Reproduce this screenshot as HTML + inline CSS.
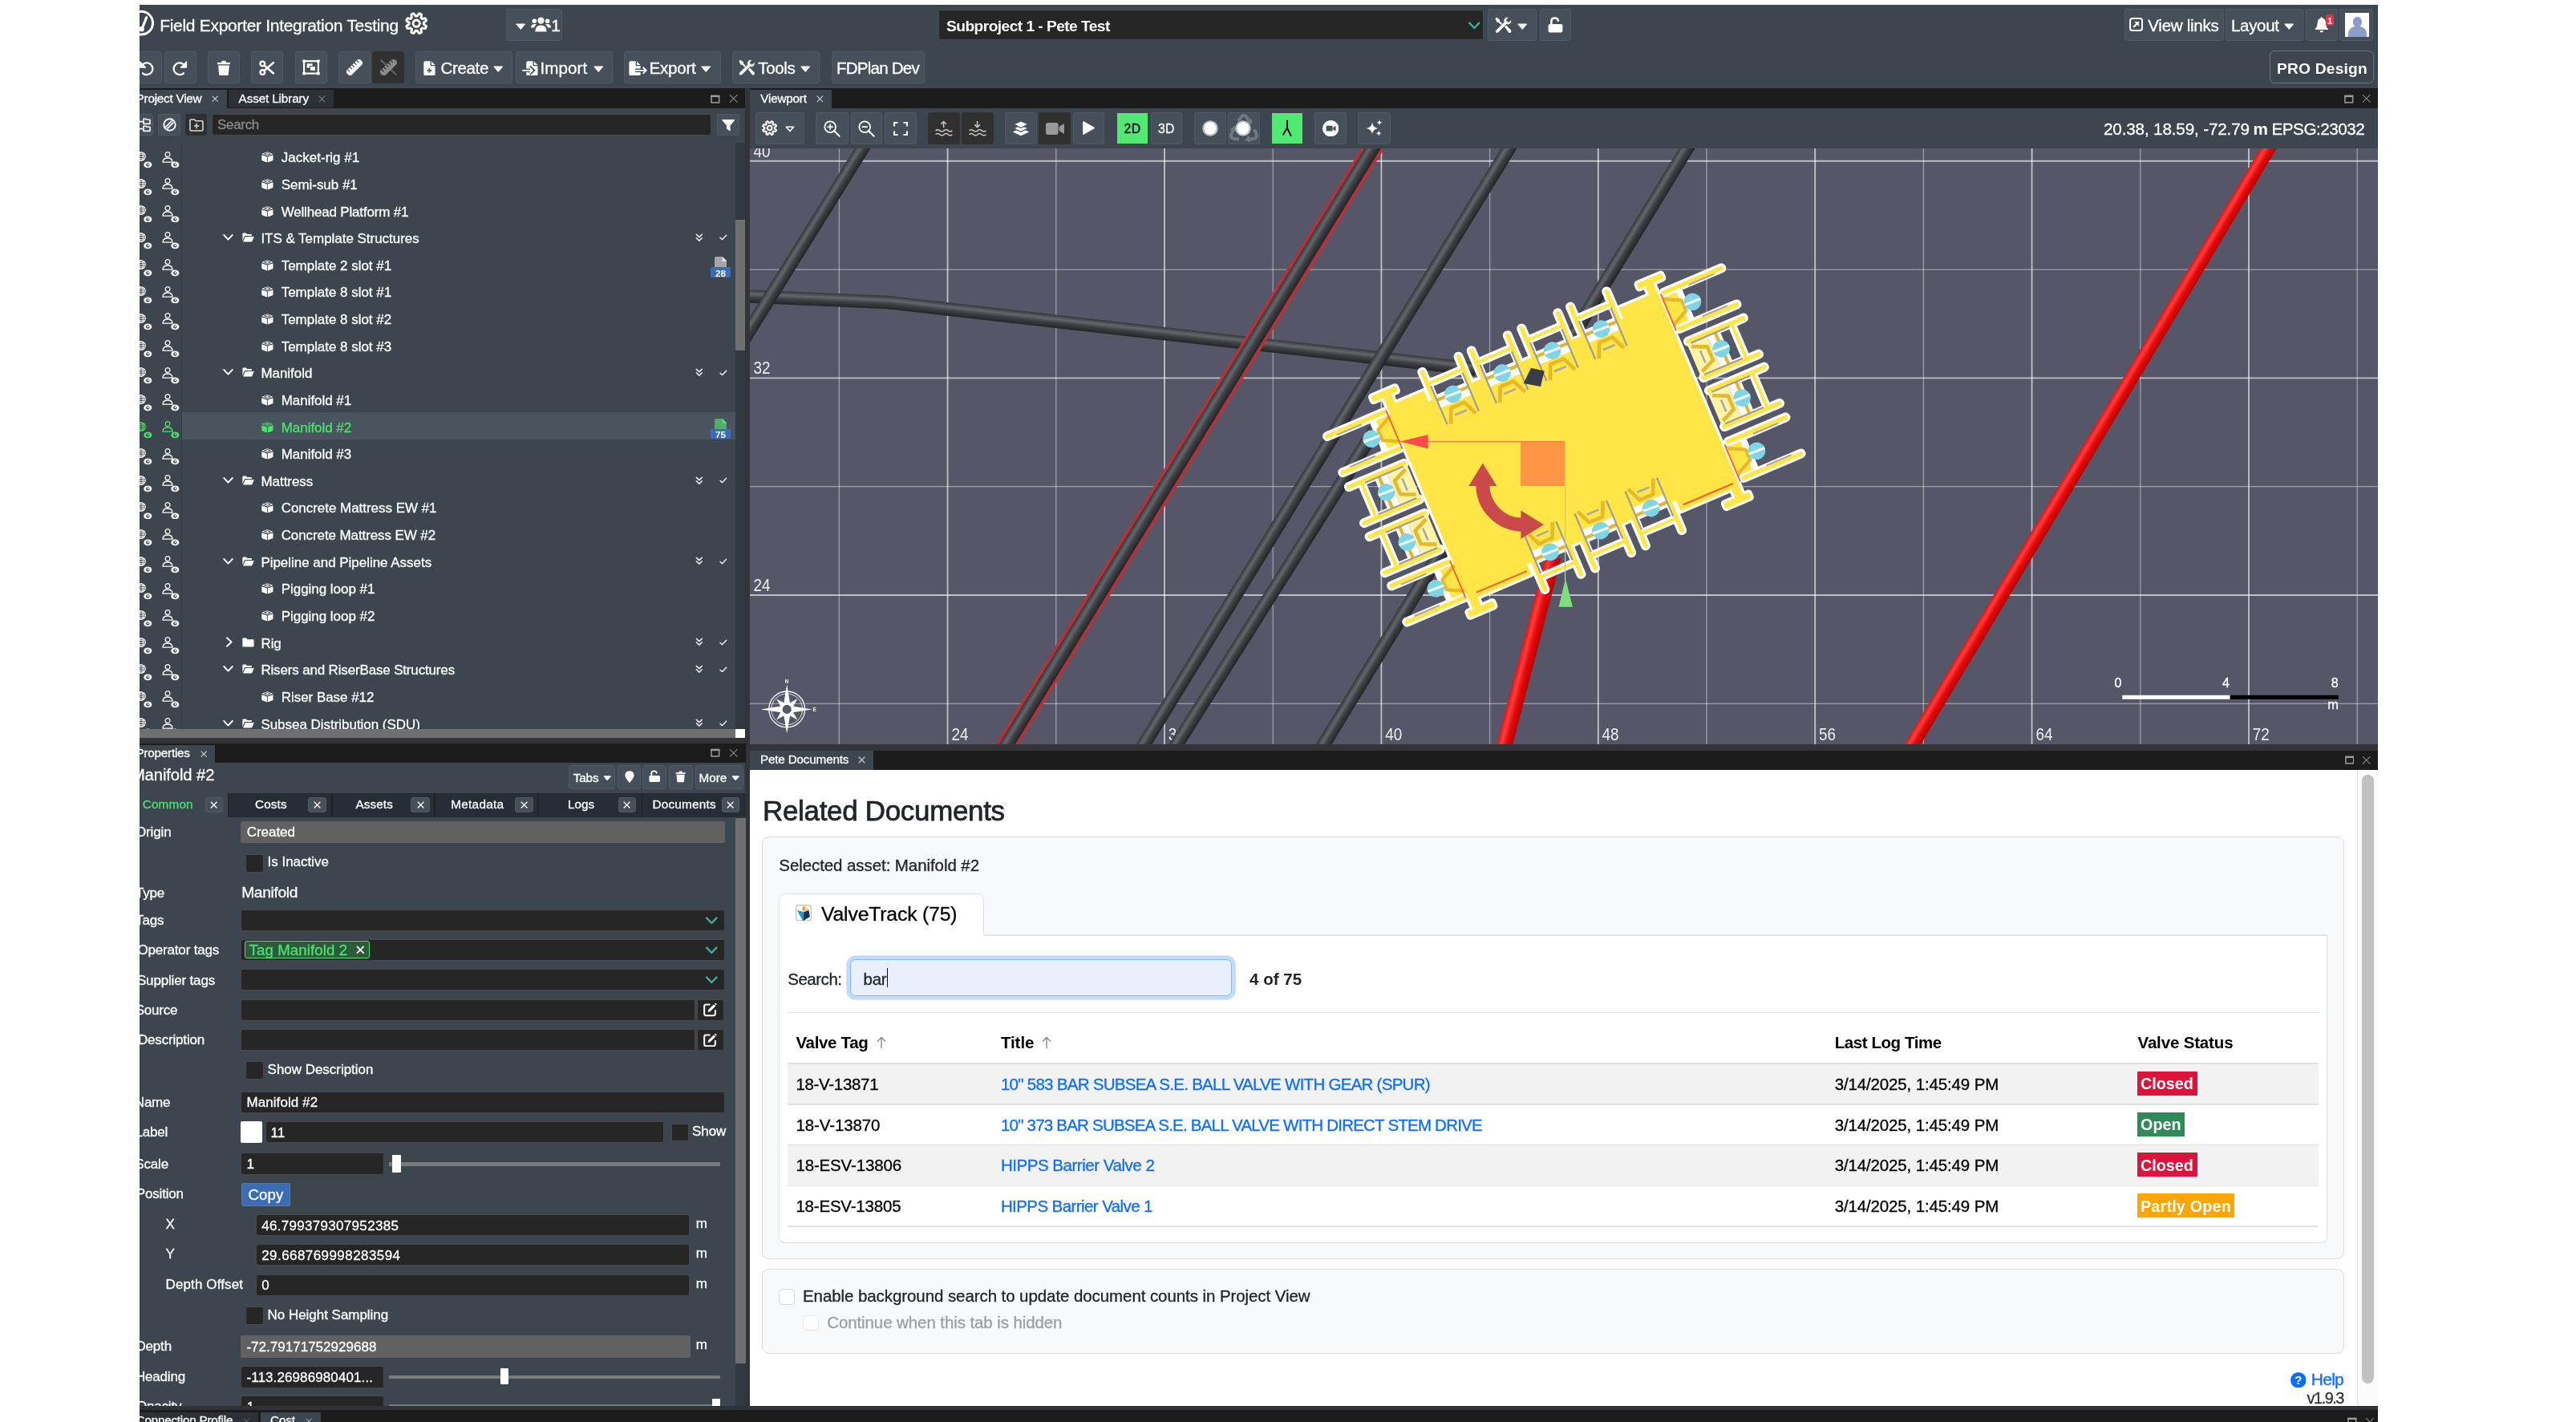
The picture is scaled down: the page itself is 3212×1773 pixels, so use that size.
<!DOCTYPE html>
<html><head><meta charset="utf-8"><title>Field Exporter Integration Testing</title>
<style>
html,body{margin:0;padding:0;background:#fff;}
body{width:3212px;height:1773px;position:relative;overflow:hidden;font-family:"Liberation Sans",sans-serif;}
#app{position:absolute;left:0;top:0;width:3212px;height:1773px;overflow:hidden;clip-path:inset(6px 247px 0 174px);will-change:transform;}
#app div,#app span.t,#app svg{position:absolute;box-sizing:border-box;}
span.t{white-space:nowrap;-webkit-text-stroke-width:0.3px;}
.btn{background:#46505a;border:1px solid #505a64;border-radius:3px;}
.btnd{background:#303030;border:1px solid #303030;border-radius:3px;}
.inp{background:#262626;border:1px solid #484745;border-radius:3px;}
</style></head><body><div id="app">
<div style="left:174.00px;top:6.00px;width:2791.00px;height:1767.00px;background:#3d454e;"></div>
<svg style="left:160.00px;top:12.00px;" width="36.00" height="36.00" viewBox="0 0 36 36"><circle cx="16.1" cy="16.7" r="14.4" fill="none" stroke="#fff" stroke-width="3"/><path d="M22.6 9.8 L17.2 23.6" stroke="#fff" stroke-width="3.2" stroke-linecap="round"/><circle cx="16.6" cy="24.2" r="3.2" fill="#fff"/></svg>
<span class="t" style="left:199.20px;top:21.40px;font-size:21.00px;line-height:21.00px;color:#fff;letter-spacing:-0.297px;">Field Exporter Integration Testing</span>
<svg style="left:505.40px;top:14.60px;" width="28.40" height="28.40" viewBox="0 0 24 24"><path d="M22.02 16.15 L21.85 16.54 L21.67 16.93 L21.47 17.30 L20.62 17.28 L19.73 17.17 L18.87 16.99 L18.09 16.80 L17.89 17.03 L17.69 17.26 L17.48 17.48 L17.26 17.69 L17.03 17.89 L16.80 18.09 L16.99 18.87 L17.17 19.73 L17.28 20.62 L17.30 21.47 L16.93 21.67 L16.54 21.85 L16.15 22.02 L15.76 22.18 L15.35 22.32 L14.94 22.44 L14.36 21.83 L13.81 21.12 L13.33 20.38 L12.91 19.70 L12.61 19.73 L12.30 19.74 L12.00 19.75 L11.70 19.74 L11.39 19.73 L11.09 19.70 L10.67 20.38 L10.19 21.12 L9.64 21.83 L9.06 22.44 L8.65 22.32 L8.24 22.18 L7.85 22.02 L7.46 21.85 L7.07 21.67 L6.70 21.47 L6.72 20.62 L6.83 19.73 L7.01 18.87 L7.20 18.09 L6.97 17.89 L6.74 17.69 L6.52 17.48 L6.31 17.26 L6.11 17.03 L5.91 16.80 L5.13 16.99 L4.27 17.17 L3.38 17.28 L2.53 17.30 L2.33 16.93 L2.15 16.54 L1.98 16.15 L1.82 15.76 L1.68 15.35 L1.56 14.94 L2.17 14.36 L2.88 13.81 L3.62 13.33 L4.30 12.91 L4.27 12.61 L4.26 12.30 L4.25 12.00 L4.26 11.70 L4.27 11.39 L4.30 11.09 L3.62 10.67 L2.88 10.19 L2.17 9.64 L1.56 9.06 L1.68 8.65 L1.82 8.24 L1.98 7.85 L2.15 7.46 L2.33 7.07 L2.53 6.70 L3.38 6.72 L4.27 6.83 L5.13 7.01 L5.91 7.20 L6.11 6.97 L6.31 6.74 L6.52 6.52 L6.74 6.31 L6.97 6.11 L7.20 5.91 L7.01 5.13 L6.83 4.27 L6.72 3.38 L6.70 2.53 L7.07 2.33 L7.46 2.15 L7.85 1.98 L8.24 1.82 L8.65 1.68 L9.06 1.56 L9.64 2.17 L10.19 2.88 L10.67 3.62 L11.09 4.30 L11.39 4.27 L11.70 4.26 L12.00 4.25 L12.30 4.26 L12.61 4.27 L12.91 4.30 L13.33 3.62 L13.81 2.88 L14.36 2.17 L14.94 1.56 L15.35 1.68 L15.76 1.82 L16.15 1.98 L16.54 2.15 L16.93 2.33 L17.30 2.53 L17.28 3.38 L17.17 4.27 L16.99 5.13 L16.80 5.91 L17.03 6.11 L17.26 6.31 L17.48 6.52 L17.69 6.74 L17.89 6.97 L18.09 7.20 L18.87 7.01 L19.73 6.83 L20.62 6.72 L21.47 6.70 L21.67 7.07 L21.85 7.46 L22.02 7.85 L22.18 8.24 L22.32 8.65 L22.44 9.06 L21.83 9.64 L21.12 10.19 L20.38 10.67 L19.70 11.09 L19.73 11.39 L19.74 11.70 L19.75 12.00 L19.74 12.30 L19.73 12.61 L19.70 12.91 L20.38 13.33 L21.12 13.81 L21.83 14.36 L22.44 14.94 L22.32 15.35 L22.18 15.76 Z" fill="none" stroke="#fff" stroke-width="2.5" stroke-linejoin="round"/><circle cx="12" cy="12" r="3.5" fill="none" stroke="#fff" stroke-width="2.5"/></svg>
<div class="btn" style="left:631.30px;top:11.00px;width:69.70px;height:40.00px;"></div>
<svg style="left:643.00px;top:28.60px;" width="12.60" height="8.00" viewBox="0 0 12 8"><path d="M0.8 1 L11.2 1 L6 7.2 Z" fill="#fff" stroke="#fff" stroke-width="1.2" stroke-linejoin="round"/></svg>
<svg style="left:662.00px;top:21.00px;" width="25.00" height="19.00" viewBox="0 0 25 19"><circle cx="12.5" cy="4.6" r="4.2" fill="#fff"/><path d="M5.4 18.6 Q5.4 10.6 12.5 10.6 Q19.6 10.6 19.6 18.6 Z" fill="#fff"/><circle cx="4.3" cy="5.2" r="2.8" fill="#fff"/><path d="M0 13.6 Q0 9 4.6 9 Q6.4 9 7 9.6 Q4.2 11.4 4 13.6 Z" fill="#fff"/><circle cx="20.7" cy="5.2" r="2.8" fill="#fff"/><path d="M25 13.6 Q25 9 20.4 9 Q18.6 9 18 9.6 Q20.8 11.4 21 13.6 Z" fill="#fff"/></svg>
<span class="t" style="left:687.20px;top:21.60px;font-size:20.60px;line-height:20.60px;color:#fff;">1</span>
<div class="inp" style="left:1169.7px;top:11.6px;width:680.7px;height:38.6px;border-radius:3px;border-color:#4a4b4c"></div>
<span class="t" style="left:1180.00px;top:23.30px;font-size:19.20px;line-height:19.20px;color:#fff;font-weight:700;-webkit-text-stroke-width:0;letter-spacing:-0.558px;">Subproject 1 - Pete Test</span>
<svg style="left:1830.60px;top:26.60px;" width="14.60" height="10.00" viewBox="0 0 14.6 10"><path d="M1.2 1.6 L7.3 8 L13.4 1.6" fill="none" stroke="#3fae9a" stroke-width="2.4" stroke-linecap="round" stroke-linejoin="round"/></svg>
<div class="btn" style="left:1855.40px;top:11.00px;width:61.10px;height:40.00px;"></div>
<svg style="left:1863.50px;top:20.50px;" width="21.00" height="21.00" viewBox="0 0 21 21"><path d="M2.2 0.6 L6 3.4 L6.2 5.4 L11 10.2 L9.4 11.8 L4.6 7 L2.6 6.8 L0.4 2.6 Z" fill="#fff"/><path d="M12 12.4 L14 10.6 L20 16.6 Q21 18 19.8 19.4 Q18.4 20.6 17 19.4 Z" fill="#fff"/><path d="M20.4 3.4 L17.4 6.2 L15 5.6 L14.6 3.4 L17.4 0.4 Q13.6 -0.4 11.6 2.4 Q10.4 4.4 11.2 6.6 L1.2 16.6 Q-0.2 18.4 1.2 19.8 Q2.8 21 4.4 19.6 L14.4 9.6 Q17.2 10.4 19.2 8.6 Q21.2 6.4 20.4 3.4 Z" fill="#fff" stroke="#46505a" stroke-width="0.8"/></svg>
<svg style="left:1892.00px;top:28.60px;" width="12.60" height="8.00" viewBox="0 0 12 8"><path d="M0.8 1 L11.2 1 L6 7.2 Z" fill="#fff" stroke="#fff" stroke-width="1.2" stroke-linejoin="round"/></svg>
<div class="btn" style="left:1920.00px;top:11.00px;width:38.50px;height:40.00px;"></div>
<svg style="left:1930.00px;top:20.50px;" width="19.00" height="20.00" viewBox="0 0 19 20"><rect x="0.6" y="9" width="17.8" height="10.6" rx="2" fill="#fff"/><path d="M4.4 9.4 V5.8 Q4.4 1.6 8.6 1.6 Q12.2 1.6 12.9 4.8" fill="none" stroke="#fff" stroke-width="2.5" stroke-linecap="round"/></svg>
<div class="btn" style="left:2649.00px;top:11.00px;width:123.70px;height:40.00px;"></div>
<svg style="left:2654.70px;top:22.40px;" width="17.20" height="17.20" viewBox="0 0 17 17"><rect x="1.1" y="1.1" width="14.8" height="14.8" rx="2.8" fill="none" stroke="#fff" stroke-width="2"/><path d="M6 5 H12 V11 Z" fill="#fff"/><path d="M5.2 11.8 L10 7" stroke="#fff" stroke-width="2.2"/></svg>
<span class="t" style="left:2678.30px;top:21.60px;font-size:20.60px;line-height:20.60px;color:#fff;letter-spacing:-0.301px;">View links</span>
<div class="btn" style="left:2775.20px;top:11.00px;width:96.80px;height:40.00px;"></div>
<span class="t" style="left:2782.00px;top:21.60px;font-size:20.60px;line-height:20.60px;color:#fff;letter-spacing:-0.375px;">Layout</span>
<svg style="left:2847.80px;top:28.60px;" width="12.60" height="8.00" viewBox="0 0 12 8"><path d="M0.8 1 L11.2 1 L6 7.2 Z" fill="#fff" stroke="#fff" stroke-width="1.2" stroke-linejoin="round"/></svg>
<div class="btn" style="left:2875.00px;top:11.00px;width:40.40px;height:40.00px;"></div>
<svg style="left:2886.30px;top:21.00px;" width="17.60" height="20.00" viewBox="0 0 18 20"><path d="M9 1 Q3.6 1.6 3.6 8 Q3.6 12.6 0.8 15 V16.2 H17.2 V15 Q14.4 12.6 14.4 8 Q14.4 1.6 9 1 Z" fill="#fff"/><rect x="7.8" y="0" width="2.4" height="2.4" rx="1.2" fill="#fff"/><path d="M6.6 17.4 H11.4 Q11 19.8 9 19.8 Q7 19.8 6.6 17.4 Z" fill="#fff"/></svg>
<div style="left:2900px;top:18px;width:10.2px;height:14px;background:#dc3545;border-radius:2.5px"></div>
<span class="t" style="left:2901.90px;top:20.65px;font-size:11.50px;line-height:11.50px;color:#fff;font-weight:700;-webkit-text-stroke-width:0;">1</span>
<div class="btn" style="left:2917.30px;top:11.00px;width:41.50px;height:40.00px;"></div>
<div style="left:2924px;top:16px;width:30px;height:30px;background:#fff;overflow:hidden"><div style="left:9.5px;top:5px;width:11px;height:12.5px;border-radius:50%;background:#8b9dc9"></div><div style="left:3.5px;top:17px;width:23px;height:22px;border-radius:9px 9px 0 0;background:#8b9dc9"></div><div style="left:12px;top:14px;width:6px;height:6px;background:#8b9dc9"></div></div>
<div class="btn" style="left:162.00px;top:64.00px;width:39.80px;height:40.00px;"></div>
<svg style="left:173.20px;top:74.60px;" width="20.00" height="20.00" viewBox="0 0 20 20"><g transform="translate(20,0) scale(-1,1)"><path d="M15.83 6.24 A7.40 7.40 0 1 0 14.95 16.30" fill="none" stroke="#fff" stroke-width="2.3" stroke-linecap="round"/><path d="M18.6 1.6 L18.6 9.2 L11 9.2 Z" fill="#fff" stroke="#fff" stroke-width="1" stroke-linejoin="round"/></g></svg>
<div class="btn" style="left:205.40px;top:64.00px;width:39.60px;height:40.00px;"></div>
<svg style="left:214.30px;top:74.60px;" width="20.00" height="20.00" viewBox="0 0 20 20"><path d="M15.83 6.24 A7.40 7.40 0 1 0 14.95 16.30" fill="none" stroke="#fff" stroke-width="2.3" stroke-linecap="round"/><path d="M18.6 1.6 L18.6 9.2 L11 9.2 Z" fill="#fff" stroke="#fff" stroke-width="1" stroke-linejoin="round"/></svg>
<div class="btn" style="left:259.30px;top:64.00px;width:39.60px;height:40.00px;"></div>
<svg style="left:270.00px;top:74.50px;" width="18.00" height="19.60" viewBox="0 0 18 20"><path d="M0.8 3 H17.2 V5.3 H0.8 Z" fill="#fff"/><path d="M5.8 3 L6.8 0.8 H11.2 L12.2 3 Z" fill="#fff"/><path d="M2 6.6 H16 L15 18.2 Q14.9 19.4 13.6 19.4 H4.4 Q3.1 19.4 3 18.2 Z" fill="#fff"/></svg>
<div class="btn" style="left:313.20px;top:64.00px;width:40.00px;height:40.00px;"></div>
<svg style="left:323.00px;top:74.50px;" width="20.00" height="19.60" viewBox="0 0 20 20"><circle cx="4.2" cy="4.6" r="2.9" fill="none" stroke="#fff" stroke-width="2.4"/><circle cx="4.2" cy="15.4" r="2.9" fill="none" stroke="#fff" stroke-width="2.4"/><path d="M6.4 6.6 L18.8 17.4 M6.4 13.4 L18.8 2.6" stroke="#fff" stroke-width="2.6" stroke-linecap="butt" fill="none"/></svg>
<div class="btn" style="left:367.50px;top:64.00px;width:40.10px;height:40.00px;"></div>
<svg style="left:376.50px;top:74.20px;" width="22.00" height="19.80" viewBox="0 0 22 20"><rect x="2" y="2.2" width="18" height="15.6" fill="none" stroke="#fff" stroke-width="2.2"/><rect x="0.2" y="0.4" width="3.8" height="3.8" rx="0.8" fill="#fff"/><rect x="18" y="0.4" width="3.8" height="3.8" rx="0.8" fill="#fff"/><rect x="0.2" y="15.8" width="3.8" height="3.8" rx="0.8" fill="#fff"/><rect x="18" y="15.8" width="3.8" height="3.8" rx="0.8" fill="#fff"/><rect x="5.6" y="5.4" width="7" height="5.2" fill="#fff"/><rect x="9.4" y="8.6" width="7.2" height="5.8" fill="#fff" stroke="#46505a" stroke-width="1"/></svg>
<div class="btn" style="left:421.90px;top:64.00px;width:40.10px;height:40.00px;"></div>
<svg style="left:431.70px;top:74.20px;" width="20.00" height="20.00" viewBox="0 0 20 20"><g transform="rotate(-45 10 10)"><rect x="-2" y="5.8" width="24" height="8.4" rx="1" fill="#fff"/><rect x="1.4" y="5.8" width="1.3" height="3.6" fill="#46505a"/><rect x="5.4" y="5.8" width="1.3" height="3.6" fill="#46505a"/><rect x="9.4" y="5.8" width="1.3" height="3.6" fill="#46505a"/><rect x="13.4" y="5.8" width="1.3" height="3.6" fill="#46505a"/><rect x="17.4" y="5.8" width="1.3" height="3.6" fill="#46505a"/></g></svg>
<div class="btnd" style="left:464.30px;top:64.00px;width:39.60px;height:40.00px;"></div>
<svg style="left:473.50px;top:74.20px;" width="21.00" height="20.00" viewBox="-0.5 0 21 20"><path d="M1 1.5 L19 18.5 M19 1.5 L1 18.5" stroke="#5a5a5a" stroke-width="2.6" stroke-linecap="round"/><g transform="rotate(-45 10 10)"><rect x="-2" y="5.8" width="24" height="8.4" rx="1" fill="#8c8c8c"/><rect x="1.4" y="5.8" width="1.3" height="3.6" fill="#303030"/><rect x="5.4" y="5.8" width="1.3" height="3.6" fill="#303030"/><rect x="9.4" y="5.8" width="1.3" height="3.6" fill="#303030"/><rect x="13.4" y="5.8" width="1.3" height="3.6" fill="#303030"/><rect x="17.4" y="5.8" width="1.3" height="3.6" fill="#303030"/></g></svg>
<div class="btn" style="left:518.30px;top:64.00px;width:121.20px;height:40.00px;"></div>
<svg style="left:528.40px;top:75.80px;" width="15.00" height="18.70" viewBox="0 0 15 19"><path d="M2 0.3 H8.6 V5.6 Q8.6 6.4 9.4 6.4 H14.7 V16.8 Q14.7 18.7 12.8 18.7 H2 Q0.2 18.7 0.2 16.8 V2.2 Q0.2 0.3 2 0.3 Z" fill="#fff"/><path d="M10 0.4 L14.6 5 H10 Z" fill="#fff"/><path d="M7.4 9 V15 M4.4 12 H10.4" stroke="#46505a" stroke-width="1.7"/></svg>
<span class="t" style="left:549.60px;top:74.60px;font-size:20.60px;line-height:20.60px;color:#fff;letter-spacing:-0.405px;">Create</span>
<svg style="left:615.00px;top:82.40px;" width="12.60" height="8.00" viewBox="0 0 12 8"><path d="M0.8 1 L11.2 1 L6 7.2 Z" fill="#fff" stroke="#fff" stroke-width="1.2" stroke-linejoin="round"/></svg>
<div class="btn" style="left:642.70px;top:64.00px;width:121.00px;height:40.00px;"></div>
<svg style="left:650.70px;top:75.80px;" width="20.00" height="18.70" viewBox="0 0 20 19"><g transform="translate(5,0)"><path d="M2 0.3 H8.6 V5.6 Q8.6 6.4 9.4 6.4 H14.7 V16.8 Q14.7 18.7 12.8 18.7 H2 Q0.2 18.7 0.2 16.8 V2.2 Q0.2 0.3 2 0.3 Z" fill="#fff"/><path d="M10 0.4 L14.6 5 H10 Z" fill="#fff"/></g><path d="M4 12 H14" stroke="#46505a" stroke-width="4.4"/><path d="M9 7.4 L14 12 L9 16.6" stroke="#46505a" stroke-width="4" fill="none"/><path d="M0.6 12 H12.6 M9 8.2 L12.9 12 L9 15.8" stroke="#fff" stroke-width="1.8" fill="none" stroke-linecap="round" stroke-linejoin="round"/></svg>
<span class="t" style="left:673.50px;top:74.60px;font-size:20.60px;line-height:20.60px;color:#fff;letter-spacing:0.053px;">Import</span>
<svg style="left:739.60px;top:82.40px;" width="12.60" height="8.00" viewBox="0 0 12 8"><path d="M0.8 1 L11.2 1 L6 7.2 Z" fill="#fff" stroke="#fff" stroke-width="1.2" stroke-linejoin="round"/></svg>
<div class="btn" style="left:778.00px;top:64.00px;width:120.90px;height:40.00px;"></div>
<svg style="left:783.80px;top:75.80px;" width="23.00" height="18.70" viewBox="0 0 23 19"><path d="M2 0.3 H8.6 V5.6 Q8.6 6.4 9.4 6.4 H14.7 V16.8 Q14.7 18.7 12.8 18.7 H2 Q0.2 18.7 0.2 16.8 V2.2 Q0.2 0.3 2 0.3 Z" fill="#fff"/><path d="M10 0.4 L14.6 5 H10 Z" fill="#fff"/><path d="M8 12 H23" stroke="#46505a" stroke-width="4.6"/><path d="M8.4 12 H21.6 M18.2 8.4 L22 12 L18.2 15.6" stroke="#fff" stroke-width="1.8" fill="none" stroke-linecap="round" stroke-linejoin="round"/></svg>
<span class="t" style="left:809.40px;top:74.60px;font-size:20.60px;line-height:20.60px;color:#fff;letter-spacing:-0.223px;">Export</span>
<svg style="left:874.30px;top:82.40px;" width="12.60" height="8.00" viewBox="0 0 12 8"><path d="M0.8 1 L11.2 1 L6 7.2 Z" fill="#fff" stroke="#fff" stroke-width="1.2" stroke-linejoin="round"/></svg>
<div class="btn" style="left:913.00px;top:64.00px;width:108.90px;height:40.00px;"></div>
<svg style="left:921.20px;top:74.20px;" width="20.60" height="20.60" viewBox="0 0 21 21"><path d="M2.2 0.6 L6 3.4 L6.2 5.4 L11 10.2 L9.4 11.8 L4.6 7 L2.6 6.8 L0.4 2.6 Z" fill="#fff"/><path d="M12 12.4 L14 10.6 L20 16.6 Q21 18 19.8 19.4 Q18.4 20.6 17 19.4 Z" fill="#fff"/><path d="M20.4 3.4 L17.4 6.2 L15 5.6 L14.6 3.4 L17.4 0.4 Q13.6 -0.4 11.6 2.4 Q10.4 4.4 11.2 6.6 L1.2 16.6 Q-0.2 18.4 1.2 19.8 Q2.8 21 4.4 19.6 L14.4 9.6 Q17.2 10.4 19.2 8.6 Q21.2 6.4 20.4 3.4 Z" fill="#fff" stroke="#46505a" stroke-width="0.8"/></svg>
<span class="t" style="left:945.30px;top:74.60px;font-size:20.60px;line-height:20.60px;color:#fff;letter-spacing:-0.418px;">Tools</span>
<svg style="left:998.00px;top:82.40px;" width="12.60" height="8.00" viewBox="0 0 12 8"><path d="M0.8 1 L11.2 1 L6 7.2 Z" fill="#fff" stroke="#fff" stroke-width="1.2" stroke-linejoin="round"/></svg>
<div class="btn" style="left:1037.30px;top:64.00px;width:115.50px;height:40.00px;"></div>
<span class="t" style="left:1043.00px;top:74.60px;font-size:20.60px;line-height:20.60px;color:#fff;letter-spacing:-0.805px;">FDPlan Dev</span>
<div style="left:2830.4px;top:63.4px;width:129.2px;height:41px;border:1.4px solid #6d767e;border-radius:6px;background:#3d454e"></div>
<span class="t" style="left:2839.00px;top:76.30px;font-size:19.20px;line-height:19.20px;color:#fff;font-weight:700;-webkit-text-stroke-width:0;letter-spacing:0.205px;">PRO Design</span>
<div style="left:173.00px;top:110.00px;width:756.00px;height:25.00px;background:#1c1c1c;"></div>
<div style="left:173.00px;top:111.50px;width:110.00px;height:23.50px;background:#3d454e;"></div>
<div style="left:284.90px;top:111.50px;width:131.10px;height:22.80px;background:#2d3036;"></div>
<span class="t" style="left:169.60px;top:115.25px;font-size:15.30px;line-height:15.30px;color:#fff;letter-spacing:-0.247px;">Project View</span>
<svg style="left:263.90px;top:119.30px;" width="8.40" height="8.40" viewBox="0 0 12 12"><path d="M1 1 L11 11 M11 1 L1 11" stroke="#d0d0d0" stroke-width="1.5" fill="none"/></svg>
<span class="t" style="left:297.60px;top:115.25px;font-size:15.30px;line-height:15.30px;color:#fff;letter-spacing:-0.145px;">Asset Library</span>
<svg style="left:397.00px;top:119.30px;" width="8.80" height="8.80" viewBox="0 0 12 12"><path d="M1 1 L11 11 M11 1 L1 11" stroke="#7c7c7c" stroke-width="1.5" fill="none"/></svg>
<svg style="left:886.20px;top:117.50px;" width="11.60" height="11.00" viewBox="0 0 12 11"><rect x="1" y="1.6" width="10" height="8.4" fill="none" stroke="#9a9a9a" stroke-width="1.6"/><rect x="0.2" y="0.4" width="11.6" height="2.6" fill="#9a9a9a"/></svg>
<svg style="left:909.30px;top:116.80px;" width="11.40" height="11.60" viewBox="0 0 12 12"><path d="M1 1 L11 11 M11 1 L1 11" stroke="#8a8a8a" stroke-width="1.1" fill="none"/></svg>
<div style="left:929.00px;top:110.00px;width:6.00px;height:1663.00px;background:#323439;"></div>
<div class="btn" style="left:160.00px;top:142.40px;width:30.60px;height:26.60px;"></div>
<svg style="left:169.60px;top:146.80px;" width="18.00" height="18.00" viewBox="0 0 18 18"><path d="M1 0 V13.6 H8 M1 4.6 H8" fill="none" stroke="#fff" stroke-width="1.8"/><path d="M9 1.2 H12 L13 2.2 H17 V7.4 H9 Z M9 10.2 H12 L13 11.2 H17 V16.4 H9 Z" fill="none" stroke="#fff" stroke-width="1.6" stroke-linejoin="round"/></svg>
<div class="btn" style="left:197.30px;top:142.40px;width:27.30px;height:26.60px;"></div>
<svg style="left:202.50px;top:147.20px;" width="17.00" height="17.00" viewBox="0 0 17 17"><circle cx="8.5" cy="8.5" r="7.2" fill="none" stroke="#fff" stroke-width="1.9"/><path d="M3.4 11.6 L11.6 3.4 M5.4 13.6 L13.6 5.4" stroke="#fff" stroke-width="1.8"/></svg>
<div class="btnd" style="left:231.30px;top:142.40px;width:26.60px;height:26.60px;"></div>
<svg style="left:235.60px;top:147.80px;" width="18.00" height="16.00" viewBox="0 0 18 16"><path d="M1 2.2 Q1 1 2.2 1 H6.4 L8 2.8 H15.8 Q17 2.8 17 4 V13.8 Q17 15 15.8 15 H2.2 Q1 15 1 13.8 Z" fill="none" stroke="#d8d8d8" stroke-width="1.6" stroke-linejoin="round"/><path d="M9 5.8 V12.2 M5.8 9 H12.2" stroke="#d8d8d8" stroke-width="1.6"/></svg>
<div class="inp" style="left:264.3px;top:142.4px;width:623.2px;height:26.6px"></div>
<span class="t" style="left:271.00px;top:147.40px;font-size:17.00px;line-height:17.00px;color:#8a8a8a;letter-spacing:-0.311px;">Search</span>
<div class="btn" style="left:894.00px;top:142.40px;width:27.70px;height:26.60px;"></div>
<svg style="left:899.60px;top:148.60px;" width="16.60" height="14.60" viewBox="0 0 17 15"><path d="M0.6 0.6 H16.4 L10.4 7.6 V14.4 L6.6 11.6 V7.6 Z" fill="#fff" stroke="#fff" stroke-width="1" stroke-linejoin="round"/></svg>
<div style="left:173px;top:178px;width:744px;height:731px;overflow:hidden">
<svg style="left:-3.00px;top:11.20px;" width="12.00" height="12.00" viewBox="0 0 12 12"><circle cx="6" cy="6" r="5.3" fill="none" stroke="#fff" stroke-width="1.1"/><ellipse cx="6" cy="6" rx="2.4" ry="5.3" fill="none" stroke="#fff" stroke-width="1"/><path d="M0.8 6 H11.2 M1.6 3.2 H10.4 M1.6 8.8 H10.4" stroke="#fff" stroke-width="1" fill="none"/></svg>
<svg style="left:6.00px;top:23.40px;" width="10.60" height="8.80" viewBox="0 0 11 9"><ellipse cx="5.5" cy="4.5" rx="5.2" ry="4.1" fill="#fff"/><circle cx="5.5" cy="4.5" r="2.3" fill="#3d454e"/><circle cx="5.9" cy="4.2" r="1.1" fill="#fff"/></svg>
<svg style="left:28.60px;top:10.60px;" width="14.00" height="14.00" viewBox="0 0 14 14"><circle cx="7" cy="3.6" r="2.9" fill="none" stroke="#fff" stroke-width="1.3"/><path d="M1 13.2 Q1 8 7 8 Q13 8 13 13.2 Z" fill="none" stroke="#fff" stroke-width="1.3" stroke-linejoin="round"/></svg>
<svg style="left:40.40px;top:23.40px;" width="10.60" height="8.80" viewBox="0 0 11 9"><ellipse cx="5.5" cy="4.5" rx="5.2" ry="4.1" fill="#fff"/><circle cx="5.5" cy="4.5" r="2.3" fill="#3d454e"/><circle cx="5.9" cy="4.2" r="1.1" fill="#fff"/></svg>
<svg style="left:153.00px;top:11.30px;" width="14.80" height="13.80" viewBox="0 0 15 14"><path d="M7.5 0.2 L14.4 2.7 Q14.8 2.9 14.4 3.1 L7.5 5.7 L0.6 3.1 Q0.2 2.9 0.6 2.7 Z" fill="#fff"/><path d="M7.5 1.5 L11.4 2.9 L7.5 4.4 L3.6 2.9 Z" fill="none" stroke="#3d454e" stroke-width="0.9"/><path d="M0.3 4.2 L7.05 6.7 V13.8 L1 11.5 Q0.3 11.2 0.3 10.5 Z" fill="#fff"/><path d="M14.7 4.2 L7.95 6.7 V13.8 L14 11.5 Q14.7 11.2 14.7 10.5 Z" fill="#fff"/></svg>
<span class="t" style="left:177.70px;top:10.40px;font-size:17.00px;line-height:17.00px;color:#fff;letter-spacing:0.021px;">Jacket-rig #1</span>
<svg style="left:-3.00px;top:44.83px;" width="12.00" height="12.00" viewBox="0 0 12 12"><circle cx="6" cy="6" r="5.3" fill="none" stroke="#fff" stroke-width="1.1"/><ellipse cx="6" cy="6" rx="2.4" ry="5.3" fill="none" stroke="#fff" stroke-width="1"/><path d="M0.8 6 H11.2 M1.6 3.2 H10.4 M1.6 8.8 H10.4" stroke="#fff" stroke-width="1" fill="none"/></svg>
<svg style="left:6.00px;top:57.03px;" width="10.60" height="8.80" viewBox="0 0 11 9"><ellipse cx="5.5" cy="4.5" rx="5.2" ry="4.1" fill="#fff"/><circle cx="5.5" cy="4.5" r="2.3" fill="#3d454e"/><circle cx="5.9" cy="4.2" r="1.1" fill="#fff"/></svg>
<svg style="left:28.60px;top:44.23px;" width="14.00" height="14.00" viewBox="0 0 14 14"><circle cx="7" cy="3.6" r="2.9" fill="none" stroke="#fff" stroke-width="1.3"/><path d="M1 13.2 Q1 8 7 8 Q13 8 13 13.2 Z" fill="none" stroke="#fff" stroke-width="1.3" stroke-linejoin="round"/></svg>
<svg style="left:40.40px;top:57.03px;" width="10.60" height="8.80" viewBox="0 0 11 9"><ellipse cx="5.5" cy="4.5" rx="5.2" ry="4.1" fill="#fff"/><circle cx="5.5" cy="4.5" r="2.3" fill="#3d454e"/><circle cx="5.9" cy="4.2" r="1.1" fill="#fff"/></svg>
<svg style="left:153.00px;top:44.93px;" width="14.80" height="13.80" viewBox="0 0 15 14"><path d="M7.5 0.2 L14.4 2.7 Q14.8 2.9 14.4 3.1 L7.5 5.7 L0.6 3.1 Q0.2 2.9 0.6 2.7 Z" fill="#fff"/><path d="M7.5 1.5 L11.4 2.9 L7.5 4.4 L3.6 2.9 Z" fill="none" stroke="#3d454e" stroke-width="0.9"/><path d="M0.3 4.2 L7.05 6.7 V13.8 L1 11.5 Q0.3 11.2 0.3 10.5 Z" fill="#fff"/><path d="M14.7 4.2 L7.95 6.7 V13.8 L14 11.5 Q14.7 11.2 14.7 10.5 Z" fill="#fff"/></svg>
<span class="t" style="left:177.70px;top:44.40px;font-size:17.00px;line-height:17.00px;color:#fff;letter-spacing:-0.036px;">Semi-sub #1</span>
<svg style="left:-3.00px;top:78.46px;" width="12.00" height="12.00" viewBox="0 0 12 12"><circle cx="6" cy="6" r="5.3" fill="none" stroke="#fff" stroke-width="1.1"/><ellipse cx="6" cy="6" rx="2.4" ry="5.3" fill="none" stroke="#fff" stroke-width="1"/><path d="M0.8 6 H11.2 M1.6 3.2 H10.4 M1.6 8.8 H10.4" stroke="#fff" stroke-width="1" fill="none"/></svg>
<svg style="left:6.00px;top:90.66px;" width="10.60" height="8.80" viewBox="0 0 11 9"><ellipse cx="5.5" cy="4.5" rx="5.2" ry="4.1" fill="#fff"/><circle cx="5.5" cy="4.5" r="2.3" fill="#3d454e"/><circle cx="5.9" cy="4.2" r="1.1" fill="#fff"/></svg>
<svg style="left:28.60px;top:77.86px;" width="14.00" height="14.00" viewBox="0 0 14 14"><circle cx="7" cy="3.6" r="2.9" fill="none" stroke="#fff" stroke-width="1.3"/><path d="M1 13.2 Q1 8 7 8 Q13 8 13 13.2 Z" fill="none" stroke="#fff" stroke-width="1.3" stroke-linejoin="round"/></svg>
<svg style="left:40.40px;top:90.66px;" width="10.60" height="8.80" viewBox="0 0 11 9"><ellipse cx="5.5" cy="4.5" rx="5.2" ry="4.1" fill="#fff"/><circle cx="5.5" cy="4.5" r="2.3" fill="#3d454e"/><circle cx="5.9" cy="4.2" r="1.1" fill="#fff"/></svg>
<svg style="left:153.00px;top:78.56px;" width="14.80" height="13.80" viewBox="0 0 15 14"><path d="M7.5 0.2 L14.4 2.7 Q14.8 2.9 14.4 3.1 L7.5 5.7 L0.6 3.1 Q0.2 2.9 0.6 2.7 Z" fill="#fff"/><path d="M7.5 1.5 L11.4 2.9 L7.5 4.4 L3.6 2.9 Z" fill="none" stroke="#3d454e" stroke-width="0.9"/><path d="M0.3 4.2 L7.05 6.7 V13.8 L1 11.5 Q0.3 11.2 0.3 10.5 Z" fill="#fff"/><path d="M14.7 4.2 L7.95 6.7 V13.8 L14 11.5 Q14.7 11.2 14.7 10.5 Z" fill="#fff"/></svg>
<span class="t" style="left:177.70px;top:78.40px;font-size:17.00px;line-height:17.00px;color:#fff;letter-spacing:-0.181px;">Wellhead Platform #1</span>
<svg style="left:-3.00px;top:112.09px;" width="12.00" height="12.00" viewBox="0 0 12 12"><circle cx="6" cy="6" r="5.3" fill="none" stroke="#fff" stroke-width="1.1"/><ellipse cx="6" cy="6" rx="2.4" ry="5.3" fill="none" stroke="#fff" stroke-width="1"/><path d="M0.8 6 H11.2 M1.6 3.2 H10.4 M1.6 8.8 H10.4" stroke="#fff" stroke-width="1" fill="none"/></svg>
<svg style="left:6.00px;top:124.29px;" width="10.60" height="8.80" viewBox="0 0 11 9"><ellipse cx="5.5" cy="4.5" rx="5.2" ry="4.1" fill="#fff"/><circle cx="5.5" cy="4.5" r="2.3" fill="#3d454e"/><circle cx="5.9" cy="4.2" r="1.1" fill="#fff"/></svg>
<svg style="left:28.60px;top:111.49px;" width="14.00" height="14.00" viewBox="0 0 14 14"><circle cx="7" cy="3.6" r="2.9" fill="none" stroke="#fff" stroke-width="1.3"/><path d="M1 13.2 Q1 8 7 8 Q13 8 13 13.2 Z" fill="none" stroke="#fff" stroke-width="1.3" stroke-linejoin="round"/></svg>
<svg style="left:40.40px;top:124.29px;" width="10.60" height="8.80" viewBox="0 0 11 9"><ellipse cx="5.5" cy="4.5" rx="5.2" ry="4.1" fill="#fff"/><circle cx="5.5" cy="4.5" r="2.3" fill="#3d454e"/><circle cx="5.9" cy="4.2" r="1.1" fill="#fff"/></svg>
<svg style="left:105.00px;top:113.29px;" width="13.00" height="9.60" viewBox="0 0 13 9.6"><path d="M1.2 2 L6.5 7.6 L11.8 2" fill="none" stroke="#fff" stroke-width="1.9" stroke-linecap="round" stroke-linejoin="round"/></svg>
<svg style="left:128.50px;top:112.29px;" width="15.00" height="12.00" viewBox="0 0 15 12"><path d="M0.4 10.4 V1.6 Q0.4 0.6 1.4 0.6 H4.8 L6.2 2 H11 Q12 2 12 3 V4 H3.8 Q3 4 2.6 4.8 Z" fill="#fff"/><path d="M3.9 5 H14.2 Q15 5 14.6 5.8 L12.4 10.8 Q12 11.5 11.2 11.5 H1 Z" fill="#fff"/></svg>
<span class="t" style="left:152.40px;top:111.40px;font-size:17.00px;line-height:17.00px;color:#fff;letter-spacing:-0.033px;">ITS &amp; Template Structures</span>
<svg style="left:694.00px;top:112.89px;" width="9.60" height="10.60" viewBox="0 0 10 11"><path d="M1.4 1.4 L5 4.8 L8.6 1.4 M1.4 6 L5 9.4 L8.6 6" fill="none" stroke="#e6e6e6" stroke-width="1.7" stroke-linecap="round" stroke-linejoin="round"/></svg>
<svg style="left:724.00px;top:114.49px;" width="9.60" height="7.80" viewBox="0 0 10 8"><path d="M1 4.4 L3.6 7 L9 1.2" fill="none" stroke="#e6e6e6" stroke-width="1.6" stroke-linecap="round" stroke-linejoin="round"/></svg>
<svg style="left:-3.00px;top:145.72px;" width="12.00" height="12.00" viewBox="0 0 12 12"><circle cx="6" cy="6" r="5.3" fill="none" stroke="#fff" stroke-width="1.1"/><ellipse cx="6" cy="6" rx="2.4" ry="5.3" fill="none" stroke="#fff" stroke-width="1"/><path d="M0.8 6 H11.2 M1.6 3.2 H10.4 M1.6 8.8 H10.4" stroke="#fff" stroke-width="1" fill="none"/></svg>
<svg style="left:6.00px;top:157.92px;" width="10.60" height="8.80" viewBox="0 0 11 9"><ellipse cx="5.5" cy="4.5" rx="5.2" ry="4.1" fill="#fff"/><circle cx="5.5" cy="4.5" r="2.3" fill="#3d454e"/><circle cx="5.9" cy="4.2" r="1.1" fill="#fff"/></svg>
<svg style="left:28.60px;top:145.12px;" width="14.00" height="14.00" viewBox="0 0 14 14"><circle cx="7" cy="3.6" r="2.9" fill="none" stroke="#fff" stroke-width="1.3"/><path d="M1 13.2 Q1 8 7 8 Q13 8 13 13.2 Z" fill="none" stroke="#fff" stroke-width="1.3" stroke-linejoin="round"/></svg>
<svg style="left:40.40px;top:157.92px;" width="10.60" height="8.80" viewBox="0 0 11 9"><ellipse cx="5.5" cy="4.5" rx="5.2" ry="4.1" fill="#fff"/><circle cx="5.5" cy="4.5" r="2.3" fill="#3d454e"/><circle cx="5.9" cy="4.2" r="1.1" fill="#fff"/></svg>
<svg style="left:153.00px;top:145.82px;" width="14.80" height="13.80" viewBox="0 0 15 14"><path d="M7.5 0.2 L14.4 2.7 Q14.8 2.9 14.4 3.1 L7.5 5.7 L0.6 3.1 Q0.2 2.9 0.6 2.7 Z" fill="#fff"/><path d="M7.5 1.5 L11.4 2.9 L7.5 4.4 L3.6 2.9 Z" fill="none" stroke="#3d454e" stroke-width="0.9"/><path d="M0.3 4.2 L7.05 6.7 V13.8 L1 11.5 Q0.3 11.2 0.3 10.5 Z" fill="#fff"/><path d="M14.7 4.2 L7.95 6.7 V13.8 L14 11.5 Q14.7 11.2 14.7 10.5 Z" fill="#fff"/></svg>
<span class="t" style="left:177.70px;top:145.40px;font-size:17.00px;line-height:17.00px;color:#fff;letter-spacing:-0.032px;">Template 2 slot #1</span>
<svg style="left:-3.00px;top:179.35px;" width="12.00" height="12.00" viewBox="0 0 12 12"><circle cx="6" cy="6" r="5.3" fill="none" stroke="#fff" stroke-width="1.1"/><ellipse cx="6" cy="6" rx="2.4" ry="5.3" fill="none" stroke="#fff" stroke-width="1"/><path d="M0.8 6 H11.2 M1.6 3.2 H10.4 M1.6 8.8 H10.4" stroke="#fff" stroke-width="1" fill="none"/></svg>
<svg style="left:6.00px;top:191.55px;" width="10.60" height="8.80" viewBox="0 0 11 9"><ellipse cx="5.5" cy="4.5" rx="5.2" ry="4.1" fill="#fff"/><circle cx="5.5" cy="4.5" r="2.3" fill="#3d454e"/><circle cx="5.9" cy="4.2" r="1.1" fill="#fff"/></svg>
<svg style="left:28.60px;top:178.75px;" width="14.00" height="14.00" viewBox="0 0 14 14"><circle cx="7" cy="3.6" r="2.9" fill="none" stroke="#fff" stroke-width="1.3"/><path d="M1 13.2 Q1 8 7 8 Q13 8 13 13.2 Z" fill="none" stroke="#fff" stroke-width="1.3" stroke-linejoin="round"/></svg>
<svg style="left:40.40px;top:191.55px;" width="10.60" height="8.80" viewBox="0 0 11 9"><ellipse cx="5.5" cy="4.5" rx="5.2" ry="4.1" fill="#fff"/><circle cx="5.5" cy="4.5" r="2.3" fill="#3d454e"/><circle cx="5.9" cy="4.2" r="1.1" fill="#fff"/></svg>
<svg style="left:153.00px;top:179.45px;" width="14.80" height="13.80" viewBox="0 0 15 14"><path d="M7.5 0.2 L14.4 2.7 Q14.8 2.9 14.4 3.1 L7.5 5.7 L0.6 3.1 Q0.2 2.9 0.6 2.7 Z" fill="#fff"/><path d="M7.5 1.5 L11.4 2.9 L7.5 4.4 L3.6 2.9 Z" fill="none" stroke="#3d454e" stroke-width="0.9"/><path d="M0.3 4.2 L7.05 6.7 V13.8 L1 11.5 Q0.3 11.2 0.3 10.5 Z" fill="#fff"/><path d="M14.7 4.2 L7.95 6.7 V13.8 L14 11.5 Q14.7 11.2 14.7 10.5 Z" fill="#fff"/></svg>
<span class="t" style="left:177.70px;top:178.40px;font-size:17.00px;line-height:17.00px;color:#fff;letter-spacing:-0.032px;">Template 8 slot #1</span>
<svg style="left:-3.00px;top:212.98px;" width="12.00" height="12.00" viewBox="0 0 12 12"><circle cx="6" cy="6" r="5.3" fill="none" stroke="#fff" stroke-width="1.1"/><ellipse cx="6" cy="6" rx="2.4" ry="5.3" fill="none" stroke="#fff" stroke-width="1"/><path d="M0.8 6 H11.2 M1.6 3.2 H10.4 M1.6 8.8 H10.4" stroke="#fff" stroke-width="1" fill="none"/></svg>
<svg style="left:6.00px;top:225.18px;" width="10.60" height="8.80" viewBox="0 0 11 9"><ellipse cx="5.5" cy="4.5" rx="5.2" ry="4.1" fill="#fff"/><circle cx="5.5" cy="4.5" r="2.3" fill="#3d454e"/><circle cx="5.9" cy="4.2" r="1.1" fill="#fff"/></svg>
<svg style="left:28.60px;top:212.38px;" width="14.00" height="14.00" viewBox="0 0 14 14"><circle cx="7" cy="3.6" r="2.9" fill="none" stroke="#fff" stroke-width="1.3"/><path d="M1 13.2 Q1 8 7 8 Q13 8 13 13.2 Z" fill="none" stroke="#fff" stroke-width="1.3" stroke-linejoin="round"/></svg>
<svg style="left:40.40px;top:225.18px;" width="10.60" height="8.80" viewBox="0 0 11 9"><ellipse cx="5.5" cy="4.5" rx="5.2" ry="4.1" fill="#fff"/><circle cx="5.5" cy="4.5" r="2.3" fill="#3d454e"/><circle cx="5.9" cy="4.2" r="1.1" fill="#fff"/></svg>
<svg style="left:153.00px;top:213.08px;" width="14.80" height="13.80" viewBox="0 0 15 14"><path d="M7.5 0.2 L14.4 2.7 Q14.8 2.9 14.4 3.1 L7.5 5.7 L0.6 3.1 Q0.2 2.9 0.6 2.7 Z" fill="#fff"/><path d="M7.5 1.5 L11.4 2.9 L7.5 4.4 L3.6 2.9 Z" fill="none" stroke="#3d454e" stroke-width="0.9"/><path d="M0.3 4.2 L7.05 6.7 V13.8 L1 11.5 Q0.3 11.2 0.3 10.5 Z" fill="#fff"/><path d="M14.7 4.2 L7.95 6.7 V13.8 L14 11.5 Q14.7 11.2 14.7 10.5 Z" fill="#fff"/></svg>
<span class="t" style="left:177.70px;top:212.40px;font-size:17.00px;line-height:17.00px;color:#fff;letter-spacing:-0.032px;">Template 8 slot #2</span>
<svg style="left:-3.00px;top:246.61px;" width="12.00" height="12.00" viewBox="0 0 12 12"><circle cx="6" cy="6" r="5.3" fill="none" stroke="#fff" stroke-width="1.1"/><ellipse cx="6" cy="6" rx="2.4" ry="5.3" fill="none" stroke="#fff" stroke-width="1"/><path d="M0.8 6 H11.2 M1.6 3.2 H10.4 M1.6 8.8 H10.4" stroke="#fff" stroke-width="1" fill="none"/></svg>
<svg style="left:6.00px;top:258.81px;" width="10.60" height="8.80" viewBox="0 0 11 9"><ellipse cx="5.5" cy="4.5" rx="5.2" ry="4.1" fill="#fff"/><circle cx="5.5" cy="4.5" r="2.3" fill="#3d454e"/><circle cx="5.9" cy="4.2" r="1.1" fill="#fff"/></svg>
<svg style="left:28.60px;top:246.01px;" width="14.00" height="14.00" viewBox="0 0 14 14"><circle cx="7" cy="3.6" r="2.9" fill="none" stroke="#fff" stroke-width="1.3"/><path d="M1 13.2 Q1 8 7 8 Q13 8 13 13.2 Z" fill="none" stroke="#fff" stroke-width="1.3" stroke-linejoin="round"/></svg>
<svg style="left:40.40px;top:258.81px;" width="10.60" height="8.80" viewBox="0 0 11 9"><ellipse cx="5.5" cy="4.5" rx="5.2" ry="4.1" fill="#fff"/><circle cx="5.5" cy="4.5" r="2.3" fill="#3d454e"/><circle cx="5.9" cy="4.2" r="1.1" fill="#fff"/></svg>
<svg style="left:153.00px;top:246.71px;" width="14.80" height="13.80" viewBox="0 0 15 14"><path d="M7.5 0.2 L14.4 2.7 Q14.8 2.9 14.4 3.1 L7.5 5.7 L0.6 3.1 Q0.2 2.9 0.6 2.7 Z" fill="#fff"/><path d="M7.5 1.5 L11.4 2.9 L7.5 4.4 L3.6 2.9 Z" fill="none" stroke="#3d454e" stroke-width="0.9"/><path d="M0.3 4.2 L7.05 6.7 V13.8 L1 11.5 Q0.3 11.2 0.3 10.5 Z" fill="#fff"/><path d="M14.7 4.2 L7.95 6.7 V13.8 L14 11.5 Q14.7 11.2 14.7 10.5 Z" fill="#fff"/></svg>
<span class="t" style="left:177.70px;top:246.40px;font-size:17.00px;line-height:17.00px;color:#fff;letter-spacing:-0.032px;">Template 8 slot #3</span>
<svg style="left:-3.00px;top:280.24px;" width="12.00" height="12.00" viewBox="0 0 12 12"><circle cx="6" cy="6" r="5.3" fill="none" stroke="#fff" stroke-width="1.1"/><ellipse cx="6" cy="6" rx="2.4" ry="5.3" fill="none" stroke="#fff" stroke-width="1"/><path d="M0.8 6 H11.2 M1.6 3.2 H10.4 M1.6 8.8 H10.4" stroke="#fff" stroke-width="1" fill="none"/></svg>
<svg style="left:6.00px;top:292.44px;" width="10.60" height="8.80" viewBox="0 0 11 9"><ellipse cx="5.5" cy="4.5" rx="5.2" ry="4.1" fill="#fff"/><circle cx="5.5" cy="4.5" r="2.3" fill="#3d454e"/><circle cx="5.9" cy="4.2" r="1.1" fill="#fff"/></svg>
<svg style="left:28.60px;top:279.64px;" width="14.00" height="14.00" viewBox="0 0 14 14"><circle cx="7" cy="3.6" r="2.9" fill="none" stroke="#fff" stroke-width="1.3"/><path d="M1 13.2 Q1 8 7 8 Q13 8 13 13.2 Z" fill="none" stroke="#fff" stroke-width="1.3" stroke-linejoin="round"/></svg>
<svg style="left:40.40px;top:292.44px;" width="10.60" height="8.80" viewBox="0 0 11 9"><ellipse cx="5.5" cy="4.5" rx="5.2" ry="4.1" fill="#fff"/><circle cx="5.5" cy="4.5" r="2.3" fill="#3d454e"/><circle cx="5.9" cy="4.2" r="1.1" fill="#fff"/></svg>
<svg style="left:105.00px;top:281.44px;" width="13.00" height="9.60" viewBox="0 0 13 9.6"><path d="M1.2 2 L6.5 7.6 L11.8 2" fill="none" stroke="#fff" stroke-width="1.9" stroke-linecap="round" stroke-linejoin="round"/></svg>
<svg style="left:128.50px;top:280.44px;" width="15.00" height="12.00" viewBox="0 0 15 12"><path d="M0.4 10.4 V1.6 Q0.4 0.6 1.4 0.6 H4.8 L6.2 2 H11 Q12 2 12 3 V4 H3.8 Q3 4 2.6 4.8 Z" fill="#fff"/><path d="M3.9 5 H14.2 Q15 5 14.6 5.8 L12.4 10.8 Q12 11.5 11.2 11.5 H1 Z" fill="#fff"/></svg>
<span class="t" style="left:152.40px;top:279.40px;font-size:17.00px;line-height:17.00px;color:#fff;letter-spacing:-0.033px;">Manifold</span>
<svg style="left:694.00px;top:281.04px;" width="9.60" height="10.60" viewBox="0 0 10 11"><path d="M1.4 1.4 L5 4.8 L8.6 1.4 M1.4 6 L5 9.4 L8.6 6" fill="none" stroke="#e6e6e6" stroke-width="1.7" stroke-linecap="round" stroke-linejoin="round"/></svg>
<svg style="left:724.00px;top:282.64px;" width="9.60" height="7.80" viewBox="0 0 10 8"><path d="M1 4.4 L3.6 7 L9 1.2" fill="none" stroke="#e6e6e6" stroke-width="1.6" stroke-linecap="round" stroke-linejoin="round"/></svg>
<svg style="left:-3.00px;top:313.87px;" width="12.00" height="12.00" viewBox="0 0 12 12"><circle cx="6" cy="6" r="5.3" fill="none" stroke="#fff" stroke-width="1.1"/><ellipse cx="6" cy="6" rx="2.4" ry="5.3" fill="none" stroke="#fff" stroke-width="1"/><path d="M0.8 6 H11.2 M1.6 3.2 H10.4 M1.6 8.8 H10.4" stroke="#fff" stroke-width="1" fill="none"/></svg>
<svg style="left:6.00px;top:326.07px;" width="10.60" height="8.80" viewBox="0 0 11 9"><ellipse cx="5.5" cy="4.5" rx="5.2" ry="4.1" fill="#fff"/><circle cx="5.5" cy="4.5" r="2.3" fill="#3d454e"/><circle cx="5.9" cy="4.2" r="1.1" fill="#fff"/></svg>
<svg style="left:28.60px;top:313.27px;" width="14.00" height="14.00" viewBox="0 0 14 14"><circle cx="7" cy="3.6" r="2.9" fill="none" stroke="#fff" stroke-width="1.3"/><path d="M1 13.2 Q1 8 7 8 Q13 8 13 13.2 Z" fill="none" stroke="#fff" stroke-width="1.3" stroke-linejoin="round"/></svg>
<svg style="left:40.40px;top:326.07px;" width="10.60" height="8.80" viewBox="0 0 11 9"><ellipse cx="5.5" cy="4.5" rx="5.2" ry="4.1" fill="#fff"/><circle cx="5.5" cy="4.5" r="2.3" fill="#3d454e"/><circle cx="5.9" cy="4.2" r="1.1" fill="#fff"/></svg>
<svg style="left:153.00px;top:313.97px;" width="14.80" height="13.80" viewBox="0 0 15 14"><path d="M7.5 0.2 L14.4 2.7 Q14.8 2.9 14.4 3.1 L7.5 5.7 L0.6 3.1 Q0.2 2.9 0.6 2.7 Z" fill="#fff"/><path d="M7.5 1.5 L11.4 2.9 L7.5 4.4 L3.6 2.9 Z" fill="none" stroke="#3d454e" stroke-width="0.9"/><path d="M0.3 4.2 L7.05 6.7 V13.8 L1 11.5 Q0.3 11.2 0.3 10.5 Z" fill="#fff"/><path d="M14.7 4.2 L7.95 6.7 V13.8 L14 11.5 Q14.7 11.2 14.7 10.5 Z" fill="#fff"/></svg>
<span class="t" style="left:177.70px;top:313.40px;font-size:17.00px;line-height:17.00px;color:#fff;letter-spacing:-0.033px;">Manifold #1</span>
<div style="left:53.70px;top:336.30px;width:690.30px;height:33.63px;background:#4a545e;"></div>
<svg style="left:-3.00px;top:347.50px;" width="12.00" height="12.00" viewBox="0 0 12 12"><circle cx="6" cy="6" r="5.3" fill="none" stroke="#4be36e" stroke-width="1.1"/><ellipse cx="6" cy="6" rx="2.4" ry="5.3" fill="none" stroke="#4be36e" stroke-width="1"/><path d="M0.8 6 H11.2 M1.6 3.2 H10.4 M1.6 8.8 H10.4" stroke="#4be36e" stroke-width="1" fill="none"/></svg>
<svg style="left:6.00px;top:359.70px;" width="10.60" height="8.80" viewBox="0 0 11 9"><ellipse cx="5.5" cy="4.5" rx="5.2" ry="4.1" fill="#4be36e"/><circle cx="5.5" cy="4.5" r="2.3" fill="#3d454e"/><circle cx="5.9" cy="4.2" r="1.1" fill="#4be36e"/></svg>
<svg style="left:28.60px;top:346.90px;" width="14.00" height="14.00" viewBox="0 0 14 14"><circle cx="7" cy="3.6" r="2.9" fill="none" stroke="#4be36e" stroke-width="1.3"/><path d="M1 13.2 Q1 8 7 8 Q13 8 13 13.2 Z" fill="none" stroke="#4be36e" stroke-width="1.3" stroke-linejoin="round"/></svg>
<svg style="left:40.40px;top:359.70px;" width="10.60" height="8.80" viewBox="0 0 11 9"><ellipse cx="5.5" cy="4.5" rx="5.2" ry="4.1" fill="#4be36e"/><circle cx="5.5" cy="4.5" r="2.3" fill="#3d454e"/><circle cx="5.9" cy="4.2" r="1.1" fill="#4be36e"/></svg>
<svg style="left:153.00px;top:347.60px;" width="14.80" height="13.80" viewBox="0 0 15 14"><path d="M7.5 0.2 L14.4 2.7 Q14.8 2.9 14.4 3.1 L7.5 5.7 L0.6 3.1 Q0.2 2.9 0.6 2.7 Z" fill="#4be36e"/><path d="M7.5 1.5 L11.4 2.9 L7.5 4.4 L3.6 2.9 Z" fill="none" stroke="#4a545e" stroke-width="0.9"/><path d="M0.3 4.2 L7.05 6.7 V13.8 L1 11.5 Q0.3 11.2 0.3 10.5 Z" fill="#4be36e"/><path d="M14.7 4.2 L7.95 6.7 V13.8 L14 11.5 Q14.7 11.2 14.7 10.5 Z" fill="#4be36e"/></svg>
<span class="t" style="left:177.70px;top:347.40px;font-size:17.00px;line-height:17.00px;color:#4be36e;letter-spacing:-0.033px;">Manifold #2</span>
<svg style="left:-3.00px;top:381.13px;" width="12.00" height="12.00" viewBox="0 0 12 12"><circle cx="6" cy="6" r="5.3" fill="none" stroke="#fff" stroke-width="1.1"/><ellipse cx="6" cy="6" rx="2.4" ry="5.3" fill="none" stroke="#fff" stroke-width="1"/><path d="M0.8 6 H11.2 M1.6 3.2 H10.4 M1.6 8.8 H10.4" stroke="#fff" stroke-width="1" fill="none"/></svg>
<svg style="left:6.00px;top:393.33px;" width="10.60" height="8.80" viewBox="0 0 11 9"><ellipse cx="5.5" cy="4.5" rx="5.2" ry="4.1" fill="#fff"/><circle cx="5.5" cy="4.5" r="2.3" fill="#3d454e"/><circle cx="5.9" cy="4.2" r="1.1" fill="#fff"/></svg>
<svg style="left:28.60px;top:380.53px;" width="14.00" height="14.00" viewBox="0 0 14 14"><circle cx="7" cy="3.6" r="2.9" fill="none" stroke="#fff" stroke-width="1.3"/><path d="M1 13.2 Q1 8 7 8 Q13 8 13 13.2 Z" fill="none" stroke="#fff" stroke-width="1.3" stroke-linejoin="round"/></svg>
<svg style="left:40.40px;top:393.33px;" width="10.60" height="8.80" viewBox="0 0 11 9"><ellipse cx="5.5" cy="4.5" rx="5.2" ry="4.1" fill="#fff"/><circle cx="5.5" cy="4.5" r="2.3" fill="#3d454e"/><circle cx="5.9" cy="4.2" r="1.1" fill="#fff"/></svg>
<svg style="left:153.00px;top:381.23px;" width="14.80" height="13.80" viewBox="0 0 15 14"><path d="M7.5 0.2 L14.4 2.7 Q14.8 2.9 14.4 3.1 L7.5 5.7 L0.6 3.1 Q0.2 2.9 0.6 2.7 Z" fill="#fff"/><path d="M7.5 1.5 L11.4 2.9 L7.5 4.4 L3.6 2.9 Z" fill="none" stroke="#3d454e" stroke-width="0.9"/><path d="M0.3 4.2 L7.05 6.7 V13.8 L1 11.5 Q0.3 11.2 0.3 10.5 Z" fill="#fff"/><path d="M14.7 4.2 L7.95 6.7 V13.8 L14 11.5 Q14.7 11.2 14.7 10.5 Z" fill="#fff"/></svg>
<span class="t" style="left:177.70px;top:380.40px;font-size:17.00px;line-height:17.00px;color:#fff;letter-spacing:-0.033px;">Manifold #3</span>
<svg style="left:-3.00px;top:414.76px;" width="12.00" height="12.00" viewBox="0 0 12 12"><circle cx="6" cy="6" r="5.3" fill="none" stroke="#fff" stroke-width="1.1"/><ellipse cx="6" cy="6" rx="2.4" ry="5.3" fill="none" stroke="#fff" stroke-width="1"/><path d="M0.8 6 H11.2 M1.6 3.2 H10.4 M1.6 8.8 H10.4" stroke="#fff" stroke-width="1" fill="none"/></svg>
<svg style="left:6.00px;top:426.96px;" width="10.60" height="8.80" viewBox="0 0 11 9"><ellipse cx="5.5" cy="4.5" rx="5.2" ry="4.1" fill="#fff"/><circle cx="5.5" cy="4.5" r="2.3" fill="#3d454e"/><circle cx="5.9" cy="4.2" r="1.1" fill="#fff"/></svg>
<svg style="left:28.60px;top:414.16px;" width="14.00" height="14.00" viewBox="0 0 14 14"><circle cx="7" cy="3.6" r="2.9" fill="none" stroke="#fff" stroke-width="1.3"/><path d="M1 13.2 Q1 8 7 8 Q13 8 13 13.2 Z" fill="none" stroke="#fff" stroke-width="1.3" stroke-linejoin="round"/></svg>
<svg style="left:40.40px;top:426.96px;" width="10.60" height="8.80" viewBox="0 0 11 9"><ellipse cx="5.5" cy="4.5" rx="5.2" ry="4.1" fill="#fff"/><circle cx="5.5" cy="4.5" r="2.3" fill="#3d454e"/><circle cx="5.9" cy="4.2" r="1.1" fill="#fff"/></svg>
<svg style="left:105.00px;top:415.96px;" width="13.00" height="9.60" viewBox="0 0 13 9.6"><path d="M1.2 2 L6.5 7.6 L11.8 2" fill="none" stroke="#fff" stroke-width="1.9" stroke-linecap="round" stroke-linejoin="round"/></svg>
<svg style="left:128.50px;top:414.96px;" width="15.00" height="12.00" viewBox="0 0 15 12"><path d="M0.4 10.4 V1.6 Q0.4 0.6 1.4 0.6 H4.8 L6.2 2 H11 Q12 2 12 3 V4 H3.8 Q3 4 2.6 4.8 Z" fill="#fff"/><path d="M3.9 5 H14.2 Q15 5 14.6 5.8 L12.4 10.8 Q12 11.5 11.2 11.5 H1 Z" fill="#fff"/></svg>
<span class="t" style="left:152.40px;top:414.40px;font-size:17.00px;line-height:17.00px;color:#fff;letter-spacing:-0.034px;">Mattress</span>
<svg style="left:694.00px;top:415.56px;" width="9.60" height="10.60" viewBox="0 0 10 11"><path d="M1.4 1.4 L5 4.8 L8.6 1.4 M1.4 6 L5 9.4 L8.6 6" fill="none" stroke="#e6e6e6" stroke-width="1.7" stroke-linecap="round" stroke-linejoin="round"/></svg>
<svg style="left:724.00px;top:417.16px;" width="9.60" height="7.80" viewBox="0 0 10 8"><path d="M1 4.4 L3.6 7 L9 1.2" fill="none" stroke="#e6e6e6" stroke-width="1.6" stroke-linecap="round" stroke-linejoin="round"/></svg>
<svg style="left:-3.00px;top:448.39px;" width="12.00" height="12.00" viewBox="0 0 12 12"><circle cx="6" cy="6" r="5.3" fill="none" stroke="#fff" stroke-width="1.1"/><ellipse cx="6" cy="6" rx="2.4" ry="5.3" fill="none" stroke="#fff" stroke-width="1"/><path d="M0.8 6 H11.2 M1.6 3.2 H10.4 M1.6 8.8 H10.4" stroke="#fff" stroke-width="1" fill="none"/></svg>
<svg style="left:6.00px;top:460.59px;" width="10.60" height="8.80" viewBox="0 0 11 9"><ellipse cx="5.5" cy="4.5" rx="5.2" ry="4.1" fill="#fff"/><circle cx="5.5" cy="4.5" r="2.3" fill="#3d454e"/><circle cx="5.9" cy="4.2" r="1.1" fill="#fff"/></svg>
<svg style="left:28.60px;top:447.79px;" width="14.00" height="14.00" viewBox="0 0 14 14"><circle cx="7" cy="3.6" r="2.9" fill="none" stroke="#fff" stroke-width="1.3"/><path d="M1 13.2 Q1 8 7 8 Q13 8 13 13.2 Z" fill="none" stroke="#fff" stroke-width="1.3" stroke-linejoin="round"/></svg>
<svg style="left:40.40px;top:460.59px;" width="10.60" height="8.80" viewBox="0 0 11 9"><ellipse cx="5.5" cy="4.5" rx="5.2" ry="4.1" fill="#fff"/><circle cx="5.5" cy="4.5" r="2.3" fill="#3d454e"/><circle cx="5.9" cy="4.2" r="1.1" fill="#fff"/></svg>
<svg style="left:153.00px;top:448.49px;" width="14.80" height="13.80" viewBox="0 0 15 14"><path d="M7.5 0.2 L14.4 2.7 Q14.8 2.9 14.4 3.1 L7.5 5.7 L0.6 3.1 Q0.2 2.9 0.6 2.7 Z" fill="#fff"/><path d="M7.5 1.5 L11.4 2.9 L7.5 4.4 L3.6 2.9 Z" fill="none" stroke="#3d454e" stroke-width="0.9"/><path d="M0.3 4.2 L7.05 6.7 V13.8 L1 11.5 Q0.3 11.2 0.3 10.5 Z" fill="#fff"/><path d="M14.7 4.2 L7.95 6.7 V13.8 L14 11.5 Q14.7 11.2 14.7 10.5 Z" fill="#fff"/></svg>
<span class="t" style="left:177.70px;top:447.40px;font-size:17.00px;line-height:17.00px;color:#fff;letter-spacing:-0.035px;">Concrete Mattress EW #1</span>
<svg style="left:-3.00px;top:482.02px;" width="12.00" height="12.00" viewBox="0 0 12 12"><circle cx="6" cy="6" r="5.3" fill="none" stroke="#fff" stroke-width="1.1"/><ellipse cx="6" cy="6" rx="2.4" ry="5.3" fill="none" stroke="#fff" stroke-width="1"/><path d="M0.8 6 H11.2 M1.6 3.2 H10.4 M1.6 8.8 H10.4" stroke="#fff" stroke-width="1" fill="none"/></svg>
<svg style="left:6.00px;top:494.22px;" width="10.60" height="8.80" viewBox="0 0 11 9"><ellipse cx="5.5" cy="4.5" rx="5.2" ry="4.1" fill="#fff"/><circle cx="5.5" cy="4.5" r="2.3" fill="#3d454e"/><circle cx="5.9" cy="4.2" r="1.1" fill="#fff"/></svg>
<svg style="left:28.60px;top:481.42px;" width="14.00" height="14.00" viewBox="0 0 14 14"><circle cx="7" cy="3.6" r="2.9" fill="none" stroke="#fff" stroke-width="1.3"/><path d="M1 13.2 Q1 8 7 8 Q13 8 13 13.2 Z" fill="none" stroke="#fff" stroke-width="1.3" stroke-linejoin="round"/></svg>
<svg style="left:40.40px;top:494.22px;" width="10.60" height="8.80" viewBox="0 0 11 9"><ellipse cx="5.5" cy="4.5" rx="5.2" ry="4.1" fill="#fff"/><circle cx="5.5" cy="4.5" r="2.3" fill="#3d454e"/><circle cx="5.9" cy="4.2" r="1.1" fill="#fff"/></svg>
<svg style="left:153.00px;top:482.12px;" width="14.80" height="13.80" viewBox="0 0 15 14"><path d="M7.5 0.2 L14.4 2.7 Q14.8 2.9 14.4 3.1 L7.5 5.7 L0.6 3.1 Q0.2 2.9 0.6 2.7 Z" fill="#fff"/><path d="M7.5 1.5 L11.4 2.9 L7.5 4.4 L3.6 2.9 Z" fill="none" stroke="#3d454e" stroke-width="0.9"/><path d="M0.3 4.2 L7.05 6.7 V13.8 L1 11.5 Q0.3 11.2 0.3 10.5 Z" fill="#fff"/><path d="M14.7 4.2 L7.95 6.7 V13.8 L14 11.5 Q14.7 11.2 14.7 10.5 Z" fill="#fff"/></svg>
<span class="t" style="left:177.70px;top:481.40px;font-size:17.00px;line-height:17.00px;color:#fff;letter-spacing:-0.097px;">Concrete Mattress EW #2</span>
<svg style="left:-3.00px;top:515.65px;" width="12.00" height="12.00" viewBox="0 0 12 12"><circle cx="6" cy="6" r="5.3" fill="none" stroke="#fff" stroke-width="1.1"/><ellipse cx="6" cy="6" rx="2.4" ry="5.3" fill="none" stroke="#fff" stroke-width="1"/><path d="M0.8 6 H11.2 M1.6 3.2 H10.4 M1.6 8.8 H10.4" stroke="#fff" stroke-width="1" fill="none"/></svg>
<svg style="left:6.00px;top:527.85px;" width="10.60" height="8.80" viewBox="0 0 11 9"><ellipse cx="5.5" cy="4.5" rx="5.2" ry="4.1" fill="#fff"/><circle cx="5.5" cy="4.5" r="2.3" fill="#3d454e"/><circle cx="5.9" cy="4.2" r="1.1" fill="#fff"/></svg>
<svg style="left:28.60px;top:515.05px;" width="14.00" height="14.00" viewBox="0 0 14 14"><circle cx="7" cy="3.6" r="2.9" fill="none" stroke="#fff" stroke-width="1.3"/><path d="M1 13.2 Q1 8 7 8 Q13 8 13 13.2 Z" fill="none" stroke="#fff" stroke-width="1.3" stroke-linejoin="round"/></svg>
<svg style="left:40.40px;top:527.85px;" width="10.60" height="8.80" viewBox="0 0 11 9"><ellipse cx="5.5" cy="4.5" rx="5.2" ry="4.1" fill="#fff"/><circle cx="5.5" cy="4.5" r="2.3" fill="#3d454e"/><circle cx="5.9" cy="4.2" r="1.1" fill="#fff"/></svg>
<svg style="left:105.00px;top:516.85px;" width="13.00" height="9.60" viewBox="0 0 13 9.6"><path d="M1.2 2 L6.5 7.6 L11.8 2" fill="none" stroke="#fff" stroke-width="1.9" stroke-linecap="round" stroke-linejoin="round"/></svg>
<svg style="left:128.50px;top:515.85px;" width="15.00" height="12.00" viewBox="0 0 15 12"><path d="M0.4 10.4 V1.6 Q0.4 0.6 1.4 0.6 H4.8 L6.2 2 H11 Q12 2 12 3 V4 H3.8 Q3 4 2.6 4.8 Z" fill="#fff"/><path d="M3.9 5 H14.2 Q15 5 14.6 5.8 L12.4 10.8 Q12 11.5 11.2 11.5 H1 Z" fill="#fff"/></svg>
<span class="t" style="left:152.40px;top:515.40px;font-size:17.00px;line-height:17.00px;color:#fff;letter-spacing:-0.031px;">Pipeline and Pipeline Assets</span>
<svg style="left:694.00px;top:516.45px;" width="9.60" height="10.60" viewBox="0 0 10 11"><path d="M1.4 1.4 L5 4.8 L8.6 1.4 M1.4 6 L5 9.4 L8.6 6" fill="none" stroke="#e6e6e6" stroke-width="1.7" stroke-linecap="round" stroke-linejoin="round"/></svg>
<svg style="left:724.00px;top:518.05px;" width="9.60" height="7.80" viewBox="0 0 10 8"><path d="M1 4.4 L3.6 7 L9 1.2" fill="none" stroke="#e6e6e6" stroke-width="1.6" stroke-linecap="round" stroke-linejoin="round"/></svg>
<svg style="left:-3.00px;top:549.28px;" width="12.00" height="12.00" viewBox="0 0 12 12"><circle cx="6" cy="6" r="5.3" fill="none" stroke="#fff" stroke-width="1.1"/><ellipse cx="6" cy="6" rx="2.4" ry="5.3" fill="none" stroke="#fff" stroke-width="1"/><path d="M0.8 6 H11.2 M1.6 3.2 H10.4 M1.6 8.8 H10.4" stroke="#fff" stroke-width="1" fill="none"/></svg>
<svg style="left:6.00px;top:561.48px;" width="10.60" height="8.80" viewBox="0 0 11 9"><ellipse cx="5.5" cy="4.5" rx="5.2" ry="4.1" fill="#fff"/><circle cx="5.5" cy="4.5" r="2.3" fill="#3d454e"/><circle cx="5.9" cy="4.2" r="1.1" fill="#fff"/></svg>
<svg style="left:28.60px;top:548.68px;" width="14.00" height="14.00" viewBox="0 0 14 14"><circle cx="7" cy="3.6" r="2.9" fill="none" stroke="#fff" stroke-width="1.3"/><path d="M1 13.2 Q1 8 7 8 Q13 8 13 13.2 Z" fill="none" stroke="#fff" stroke-width="1.3" stroke-linejoin="round"/></svg>
<svg style="left:40.40px;top:561.48px;" width="10.60" height="8.80" viewBox="0 0 11 9"><ellipse cx="5.5" cy="4.5" rx="5.2" ry="4.1" fill="#fff"/><circle cx="5.5" cy="4.5" r="2.3" fill="#3d454e"/><circle cx="5.9" cy="4.2" r="1.1" fill="#fff"/></svg>
<svg style="left:153.00px;top:549.38px;" width="14.80" height="13.80" viewBox="0 0 15 14"><path d="M7.5 0.2 L14.4 2.7 Q14.8 2.9 14.4 3.1 L7.5 5.7 L0.6 3.1 Q0.2 2.9 0.6 2.7 Z" fill="#fff"/><path d="M7.5 1.5 L11.4 2.9 L7.5 4.4 L3.6 2.9 Z" fill="none" stroke="#3d454e" stroke-width="0.9"/><path d="M0.3 4.2 L7.05 6.7 V13.8 L1 11.5 Q0.3 11.2 0.3 10.5 Z" fill="#fff"/><path d="M14.7 4.2 L7.95 6.7 V13.8 L14 11.5 Q14.7 11.2 14.7 10.5 Z" fill="#fff"/></svg>
<span class="t" style="left:177.70px;top:548.40px;font-size:17.00px;line-height:17.00px;color:#fff;letter-spacing:-0.032px;">Pigging loop #1</span>
<svg style="left:-3.00px;top:582.91px;" width="12.00" height="12.00" viewBox="0 0 12 12"><circle cx="6" cy="6" r="5.3" fill="none" stroke="#fff" stroke-width="1.1"/><ellipse cx="6" cy="6" rx="2.4" ry="5.3" fill="none" stroke="#fff" stroke-width="1"/><path d="M0.8 6 H11.2 M1.6 3.2 H10.4 M1.6 8.8 H10.4" stroke="#fff" stroke-width="1" fill="none"/></svg>
<svg style="left:6.00px;top:595.11px;" width="10.60" height="8.80" viewBox="0 0 11 9"><ellipse cx="5.5" cy="4.5" rx="5.2" ry="4.1" fill="#fff"/><circle cx="5.5" cy="4.5" r="2.3" fill="#3d454e"/><circle cx="5.9" cy="4.2" r="1.1" fill="#fff"/></svg>
<svg style="left:28.60px;top:582.31px;" width="14.00" height="14.00" viewBox="0 0 14 14"><circle cx="7" cy="3.6" r="2.9" fill="none" stroke="#fff" stroke-width="1.3"/><path d="M1 13.2 Q1 8 7 8 Q13 8 13 13.2 Z" fill="none" stroke="#fff" stroke-width="1.3" stroke-linejoin="round"/></svg>
<svg style="left:40.40px;top:595.11px;" width="10.60" height="8.80" viewBox="0 0 11 9"><ellipse cx="5.5" cy="4.5" rx="5.2" ry="4.1" fill="#fff"/><circle cx="5.5" cy="4.5" r="2.3" fill="#3d454e"/><circle cx="5.9" cy="4.2" r="1.1" fill="#fff"/></svg>
<svg style="left:153.00px;top:583.01px;" width="14.80" height="13.80" viewBox="0 0 15 14"><path d="M7.5 0.2 L14.4 2.7 Q14.8 2.9 14.4 3.1 L7.5 5.7 L0.6 3.1 Q0.2 2.9 0.6 2.7 Z" fill="#fff"/><path d="M7.5 1.5 L11.4 2.9 L7.5 4.4 L3.6 2.9 Z" fill="none" stroke="#3d454e" stroke-width="0.9"/><path d="M0.3 4.2 L7.05 6.7 V13.8 L1 11.5 Q0.3 11.2 0.3 10.5 Z" fill="#fff"/><path d="M14.7 4.2 L7.95 6.7 V13.8 L14 11.5 Q14.7 11.2 14.7 10.5 Z" fill="#fff"/></svg>
<span class="t" style="left:177.70px;top:582.40px;font-size:17.00px;line-height:17.00px;color:#fff;letter-spacing:-0.032px;">Pigging loop #2</span>
<svg style="left:-3.00px;top:616.54px;" width="12.00" height="12.00" viewBox="0 0 12 12"><circle cx="6" cy="6" r="5.3" fill="none" stroke="#fff" stroke-width="1.1"/><ellipse cx="6" cy="6" rx="2.4" ry="5.3" fill="none" stroke="#fff" stroke-width="1"/><path d="M0.8 6 H11.2 M1.6 3.2 H10.4 M1.6 8.8 H10.4" stroke="#fff" stroke-width="1" fill="none"/></svg>
<svg style="left:6.00px;top:628.74px;" width="10.60" height="8.80" viewBox="0 0 11 9"><ellipse cx="5.5" cy="4.5" rx="5.2" ry="4.1" fill="#fff"/><circle cx="5.5" cy="4.5" r="2.3" fill="#3d454e"/><circle cx="5.9" cy="4.2" r="1.1" fill="#fff"/></svg>
<svg style="left:28.60px;top:615.94px;" width="14.00" height="14.00" viewBox="0 0 14 14"><circle cx="7" cy="3.6" r="2.9" fill="none" stroke="#fff" stroke-width="1.3"/><path d="M1 13.2 Q1 8 7 8 Q13 8 13 13.2 Z" fill="none" stroke="#fff" stroke-width="1.3" stroke-linejoin="round"/></svg>
<svg style="left:40.40px;top:628.74px;" width="10.60" height="8.80" viewBox="0 0 11 9"><ellipse cx="5.5" cy="4.5" rx="5.2" ry="4.1" fill="#fff"/><circle cx="5.5" cy="4.5" r="2.3" fill="#3d454e"/><circle cx="5.9" cy="4.2" r="1.1" fill="#fff"/></svg>
<svg style="left:107.50px;top:615.74px;" width="9.60" height="13.00" viewBox="0 0 9.6 13"><path d="M2 1.2 L7.6 6.5 L2 11.8" fill="none" stroke="#fff" stroke-width="1.9" stroke-linecap="round" stroke-linejoin="round"/></svg>
<svg style="left:128.50px;top:616.74px;" width="15.00" height="12.00" viewBox="0 0 15 12"><path d="M0.4 10.4 V1.6 Q0.4 0.6 1.4 0.6 H5 L6.6 2.2 H13.4 Q14.6 2.2 14.6 3.4 V10.4 Q14.6 11.5 13.4 11.5 H1.6 Q0.4 11.5 0.4 10.4 Z" fill="#fff"/></svg>
<span class="t" style="left:152.40px;top:616.40px;font-size:17.00px;line-height:17.00px;color:#fff;letter-spacing:-0.035px;">Rig</span>
<svg style="left:694.00px;top:617.34px;" width="9.60" height="10.60" viewBox="0 0 10 11"><path d="M1.4 1.4 L5 4.8 L8.6 1.4 M1.4 6 L5 9.4 L8.6 6" fill="none" stroke="#e6e6e6" stroke-width="1.7" stroke-linecap="round" stroke-linejoin="round"/></svg>
<svg style="left:724.00px;top:618.94px;" width="9.60" height="7.80" viewBox="0 0 10 8"><path d="M1 4.4 L3.6 7 L9 1.2" fill="none" stroke="#e6e6e6" stroke-width="1.6" stroke-linecap="round" stroke-linejoin="round"/></svg>
<svg style="left:-3.00px;top:650.17px;" width="12.00" height="12.00" viewBox="0 0 12 12"><circle cx="6" cy="6" r="5.3" fill="none" stroke="#fff" stroke-width="1.1"/><ellipse cx="6" cy="6" rx="2.4" ry="5.3" fill="none" stroke="#fff" stroke-width="1"/><path d="M0.8 6 H11.2 M1.6 3.2 H10.4 M1.6 8.8 H10.4" stroke="#fff" stroke-width="1" fill="none"/></svg>
<svg style="left:6.00px;top:662.37px;" width="10.60" height="8.80" viewBox="0 0 11 9"><ellipse cx="5.5" cy="4.5" rx="5.2" ry="4.1" fill="#fff"/><circle cx="5.5" cy="4.5" r="2.3" fill="#3d454e"/><circle cx="5.9" cy="4.2" r="1.1" fill="#fff"/></svg>
<svg style="left:28.60px;top:649.57px;" width="14.00" height="14.00" viewBox="0 0 14 14"><circle cx="7" cy="3.6" r="2.9" fill="none" stroke="#fff" stroke-width="1.3"/><path d="M1 13.2 Q1 8 7 8 Q13 8 13 13.2 Z" fill="none" stroke="#fff" stroke-width="1.3" stroke-linejoin="round"/></svg>
<svg style="left:40.40px;top:662.37px;" width="10.60" height="8.80" viewBox="0 0 11 9"><ellipse cx="5.5" cy="4.5" rx="5.2" ry="4.1" fill="#fff"/><circle cx="5.5" cy="4.5" r="2.3" fill="#3d454e"/><circle cx="5.9" cy="4.2" r="1.1" fill="#fff"/></svg>
<svg style="left:105.00px;top:651.37px;" width="13.00" height="9.60" viewBox="0 0 13 9.6"><path d="M1.2 2 L6.5 7.6 L11.8 2" fill="none" stroke="#fff" stroke-width="1.9" stroke-linecap="round" stroke-linejoin="round"/></svg>
<svg style="left:128.50px;top:650.37px;" width="15.00" height="12.00" viewBox="0 0 15 12"><path d="M0.4 10.4 V1.6 Q0.4 0.6 1.4 0.6 H4.8 L6.2 2 H11 Q12 2 12 3 V4 H3.8 Q3 4 2.6 4.8 Z" fill="#fff"/><path d="M3.9 5 H14.2 Q15 5 14.6 5.8 L12.4 10.8 Q12 11.5 11.2 11.5 H1 Z" fill="#fff"/></svg>
<span class="t" style="left:152.40px;top:649.40px;font-size:17.00px;line-height:17.00px;color:#fff;letter-spacing:-0.161px;">Risers and RiserBase Structures</span>
<svg style="left:694.00px;top:650.97px;" width="9.60" height="10.60" viewBox="0 0 10 11"><path d="M1.4 1.4 L5 4.8 L8.6 1.4 M1.4 6 L5 9.4 L8.6 6" fill="none" stroke="#e6e6e6" stroke-width="1.7" stroke-linecap="round" stroke-linejoin="round"/></svg>
<svg style="left:724.00px;top:652.57px;" width="9.60" height="7.80" viewBox="0 0 10 8"><path d="M1 4.4 L3.6 7 L9 1.2" fill="none" stroke="#e6e6e6" stroke-width="1.6" stroke-linecap="round" stroke-linejoin="round"/></svg>
<svg style="left:-3.00px;top:683.80px;" width="12.00" height="12.00" viewBox="0 0 12 12"><circle cx="6" cy="6" r="5.3" fill="none" stroke="#fff" stroke-width="1.1"/><ellipse cx="6" cy="6" rx="2.4" ry="5.3" fill="none" stroke="#fff" stroke-width="1"/><path d="M0.8 6 H11.2 M1.6 3.2 H10.4 M1.6 8.8 H10.4" stroke="#fff" stroke-width="1" fill="none"/></svg>
<svg style="left:6.00px;top:696.00px;" width="10.60" height="8.80" viewBox="0 0 11 9"><ellipse cx="5.5" cy="4.5" rx="5.2" ry="4.1" fill="#fff"/><circle cx="5.5" cy="4.5" r="2.3" fill="#3d454e"/><circle cx="5.9" cy="4.2" r="1.1" fill="#fff"/></svg>
<svg style="left:28.60px;top:683.20px;" width="14.00" height="14.00" viewBox="0 0 14 14"><circle cx="7" cy="3.6" r="2.9" fill="none" stroke="#fff" stroke-width="1.3"/><path d="M1 13.2 Q1 8 7 8 Q13 8 13 13.2 Z" fill="none" stroke="#fff" stroke-width="1.3" stroke-linejoin="round"/></svg>
<svg style="left:40.40px;top:696.00px;" width="10.60" height="8.80" viewBox="0 0 11 9"><ellipse cx="5.5" cy="4.5" rx="5.2" ry="4.1" fill="#fff"/><circle cx="5.5" cy="4.5" r="2.3" fill="#3d454e"/><circle cx="5.9" cy="4.2" r="1.1" fill="#fff"/></svg>
<svg style="left:153.00px;top:683.90px;" width="14.80" height="13.80" viewBox="0 0 15 14"><path d="M7.5 0.2 L14.4 2.7 Q14.8 2.9 14.4 3.1 L7.5 5.7 L0.6 3.1 Q0.2 2.9 0.6 2.7 Z" fill="#fff"/><path d="M7.5 1.5 L11.4 2.9 L7.5 4.4 L3.6 2.9 Z" fill="none" stroke="#3d454e" stroke-width="0.9"/><path d="M0.3 4.2 L7.05 6.7 V13.8 L1 11.5 Q0.3 11.2 0.3 10.5 Z" fill="#fff"/><path d="M14.7 4.2 L7.95 6.7 V13.8 L14 11.5 Q14.7 11.2 14.7 10.5 Z" fill="#fff"/></svg>
<span class="t" style="left:177.70px;top:683.40px;font-size:17.00px;line-height:17.00px;color:#fff;letter-spacing:-0.034px;">Riser Base #12</span>
<svg style="left:-3.00px;top:717.43px;" width="12.00" height="12.00" viewBox="0 0 12 12"><circle cx="6" cy="6" r="5.3" fill="none" stroke="#fff" stroke-width="1.1"/><ellipse cx="6" cy="6" rx="2.4" ry="5.3" fill="none" stroke="#fff" stroke-width="1"/><path d="M0.8 6 H11.2 M1.6 3.2 H10.4 M1.6 8.8 H10.4" stroke="#fff" stroke-width="1" fill="none"/></svg>
<svg style="left:6.00px;top:729.63px;" width="10.60" height="8.80" viewBox="0 0 11 9"><ellipse cx="5.5" cy="4.5" rx="5.2" ry="4.1" fill="#fff"/><circle cx="5.5" cy="4.5" r="2.3" fill="#3d454e"/><circle cx="5.9" cy="4.2" r="1.1" fill="#fff"/></svg>
<svg style="left:28.60px;top:716.83px;" width="14.00" height="14.00" viewBox="0 0 14 14"><circle cx="7" cy="3.6" r="2.9" fill="none" stroke="#fff" stroke-width="1.3"/><path d="M1 13.2 Q1 8 7 8 Q13 8 13 13.2 Z" fill="none" stroke="#fff" stroke-width="1.3" stroke-linejoin="round"/></svg>
<svg style="left:40.40px;top:729.63px;" width="10.60" height="8.80" viewBox="0 0 11 9"><ellipse cx="5.5" cy="4.5" rx="5.2" ry="4.1" fill="#fff"/><circle cx="5.5" cy="4.5" r="2.3" fill="#3d454e"/><circle cx="5.9" cy="4.2" r="1.1" fill="#fff"/></svg>
<svg style="left:105.00px;top:718.63px;" width="13.00" height="9.60" viewBox="0 0 13 9.6"><path d="M1.2 2 L6.5 7.6 L11.8 2" fill="none" stroke="#fff" stroke-width="1.9" stroke-linecap="round" stroke-linejoin="round"/></svg>
<svg style="left:128.50px;top:717.63px;" width="15.00" height="12.00" viewBox="0 0 15 12"><path d="M0.4 10.4 V1.6 Q0.4 0.6 1.4 0.6 H4.8 L6.2 2 H11 Q12 2 12 3 V4 H3.8 Q3 4 2.6 4.8 Z" fill="#fff"/><path d="M3.9 5 H14.2 Q15 5 14.6 5.8 L12.4 10.8 Q12 11.5 11.2 11.5 H1 Z" fill="#fff"/></svg>
<span class="t" style="left:152.40px;top:717.40px;font-size:17.00px;line-height:17.00px;color:#fff;letter-spacing:-0.033px;">Subsea Distribution (SDU)</span>
<svg style="left:694.00px;top:718.23px;" width="9.60" height="10.60" viewBox="0 0 10 11"><path d="M1.4 1.4 L5 4.8 L8.6 1.4 M1.4 6 L5 9.4 L8.6 6" fill="none" stroke="#e6e6e6" stroke-width="1.7" stroke-linecap="round" stroke-linejoin="round"/></svg>
<svg style="left:724.00px;top:719.83px;" width="9.60" height="7.80" viewBox="0 0 10 8"><path d="M1 4.4 L3.6 7 L9 1.2" fill="none" stroke="#e6e6e6" stroke-width="1.6" stroke-linecap="round" stroke-linejoin="round"/></svg>
<svg style="left:717.70px;top:142.02px;" width="15.50" height="13.00" viewBox="0 0 16 13.4"><path d="M2 0 H10 L16 6 V14 H0 V2 Q0 0 2 0 Z" fill="#a3a7ab"/><path d="M10 0 L16 6 H10 Z" fill="#ececec"/></svg>
<div style="left:713.00px;top:154.82px;width:25.00px;height:12.80px;background:#3a6db5;border-radius:2px;"></div>
<span class="t" style="left:719.05px;top:156.60px;font-size:11.60px;line-height:11.60px;color:#fff;font-weight:700;-webkit-text-stroke-width:0;">28</span>
<svg style="left:717.70px;top:343.80px;" width="15.50" height="13.00" viewBox="0 0 16 13.4"><path d="M2 0 H10 L16 6 V14 H0 V2 Q0 0 2 0 Z" fill="#4fae6a"/><path d="M10 0 L16 6 H10 Z" fill="#5fe07f"/></svg>
<div style="left:713.00px;top:356.60px;width:25.00px;height:12.80px;background:#3a6db5;border-radius:2px;"></div>
<span class="t" style="left:719.05px;top:357.60px;font-size:11.60px;line-height:11.60px;color:#fff;font-weight:700;-webkit-text-stroke-width:0;">75</span>
</div>
<div style="left:226.20px;top:178.00px;width:1.00px;height:731.00px;background:#363d45;"></div>
<div style="left:917.00px;top:178.00px;width:12.00px;height:731.00px;background:#323840;"></div>
<div style="left:917.00px;top:273.80px;width:12.00px;height:163.70px;background:#6f6f6f;"></div>
<div style="left:173.00px;top:909.00px;width:743.60px;height:11.00px;background:#6f6f6f;"></div>
<div style="left:916.60px;top:909.00px;width:12.40px;height:11.00px;background:#fff;"></div>
<div style="left:173.00px;top:920.00px;width:756.00px;height:7.00px;background:#323439;"></div>
<div style="left:173.00px;top:927.00px;width:756.60px;height:24.00px;background:#1c1c1c;"></div>
<div style="left:173.00px;top:928.60px;width:95.00px;height:22.40px;background:#3d454e;"></div>
<span class="t" style="left:169.40px;top:931.25px;font-size:15.30px;line-height:15.30px;color:#fff;letter-spacing:-0.233px;">Properties</span>
<svg style="left:249.60px;top:936.20px;" width="8.40" height="8.40" viewBox="0 0 12 12"><path d="M1 1 L11 11 M11 1 L1 11" stroke="#d0d0d0" stroke-width="1.5" fill="none"/></svg>
<svg style="left:886.30px;top:933.40px;" width="11.60" height="11.20" viewBox="0 0 12 11"><rect x="1" y="1.6" width="10" height="8.4" fill="none" stroke="#9a9a9a" stroke-width="1.6"/><rect x="0.2" y="0.4" width="11.6" height="2.6" fill="#9a9a9a"/></svg>
<svg style="left:908.90px;top:933.20px;" width="11.40" height="11.60" viewBox="0 0 12 12"><path d="M1 1 L11 11 M11 1 L1 11" stroke="#8a8a8a" stroke-width="1.1" fill="none"/></svg>
<span class="t" style="left:163.90px;top:956.30px;font-size:20.20px;line-height:20.20px;color:#fff;letter-spacing:-0.085px;">Manifold #2</span>
<div class="btn" style="left:709.00px;top:954.00px;width:58.00px;height:29.80px;"></div>
<span class="t" style="left:714.70px;top:962.25px;font-size:15.30px;line-height:15.30px;color:#fff;letter-spacing:-0.155px;">Tabs</span>
<svg style="left:752.00px;top:967.40px;" width="10.40" height="6.60" viewBox="0 0 12 8"><path d="M0.8 1 L11.2 1 L6 7.2 Z" fill="#fff" stroke="#fff" stroke-width="1.2" stroke-linejoin="round"/></svg>
<div class="btn" style="left:769.80px;top:954.00px;width:29.60px;height:29.80px;"></div>
<svg style="left:778.80px;top:960.60px;" width="12.00" height="15.40" viewBox="0 0 14 18"><path d="M7 0.4 Q13.6 0.6 13.6 7 Q13.4 10.6 7 17.6 Q0.6 10.6 0.4 7 Q0.4 0.6 7 0.4 Z" fill="#fff"/></svg>
<div class="btn" style="left:801.30px;top:954.00px;width:29.70px;height:29.80px;"></div>
<svg style="left:809.20px;top:960.40px;" width="14.40" height="15.40" viewBox="0 0 19 20"><rect x="0.6" y="9" width="17.8" height="10.6" rx="2" fill="#fff"/><path d="M4.4 9.4 V5.8 Q4.4 1.6 8.6 1.6 Q12.2 1.6 12.9 4.8" fill="none" stroke="#fff" stroke-width="2.5" stroke-linecap="round"/></svg>
<div class="btn" style="left:834.00px;top:954.00px;width:29.80px;height:29.80px;"></div>
<svg style="left:842.40px;top:961.20px;" width="13.20" height="14.60" viewBox="0 0 18 20"><path d="M0.8 3 H17.2 V5.3 H0.8 Z" fill="#fff"/><path d="M5.8 3 L6.8 0.8 H11.2 L12.2 3 Z" fill="#fff"/><path d="M2 6.6 H16 L15 18.2 Q14.9 19.4 13.6 19.4 H4.4 Q3.1 19.4 3 18.2 Z" fill="#fff"/></svg>
<div class="btn" style="left:867.00px;top:954.00px;width:59.70px;height:29.80px;"></div>
<span class="t" style="left:871.40px;top:962.25px;font-size:15.30px;line-height:15.30px;color:#fff;letter-spacing:0.010px;">More</span>
<svg style="left:911.90px;top:967.40px;" width="10.40" height="6.60" viewBox="0 0 12 8"><path d="M0.8 1 L11.2 1 L6 7.2 Z" fill="#fff" stroke="#fff" stroke-width="1.2" stroke-linejoin="round"/></svg>
<div style="left:173.00px;top:988.70px;width:756.60px;height:30.50px;background:#272d35;"></div>
<div style="left:173.00px;top:988.70px;width:111.60px;height:30.50px;background:#3d454e;"></div>
<span class="t" style="left:177.72px;top:995.25px;font-size:15.30px;line-height:15.30px;color:#4be36e;letter-spacing:0.157px;">Common</span>
<div class="btn" style="left:255.64px;top:994.20px;width:21.94px;height:18.60px;"></div>
<svg style="left:262.01px;top:998.90px;" width="9.20" height="9.20" viewBox="0 0 12 12"><path d="M1 1 L11 11 M11 1 L1 11" stroke="#fff" stroke-width="1.7" fill="none"/></svg>
<div style="left:283.90px;top:988.70px;width:1.40px;height:30.50px;background:#1f242a;"></div>
<span class="t" style="left:318.09px;top:995.25px;font-size:15.30px;line-height:15.30px;color:#fff;letter-spacing:0.111px;">Costs</span>
<div class="btn" style="left:383.63px;top:994.20px;width:23.07px;height:18.60px;"></div>
<svg style="left:390.56px;top:998.90px;" width="9.20" height="9.20" viewBox="0 0 12 12"><path d="M1 1 L11 11 M11 1 L1 11" stroke="#fff" stroke-width="1.7" fill="none"/></svg>
<div style="left:413.30px;top:988.70px;width:1.40px;height:30.50px;background:#1f242a;"></div>
<span class="t" style="left:443.54px;top:995.25px;font-size:15.30px;line-height:15.30px;color:#fff;letter-spacing:0.083px;">Assets</span>
<div class="btn" style="left:512.46px;top:994.20px;width:23.35px;height:18.60px;"></div>
<svg style="left:519.54px;top:998.90px;" width="9.20" height="9.20" viewBox="0 0 12 12"><path d="M1 1 L11 11 M11 1 L1 11" stroke="#fff" stroke-width="1.7" fill="none"/></svg>
<div style="left:541.30px;top:988.70px;width:1.40px;height:30.50px;background:#1f242a;"></div>
<span class="t" style="left:562.25px;top:995.25px;font-size:15.30px;line-height:15.30px;color:#fff;letter-spacing:0.289px;">Metadata</span>
<div class="btn" style="left:641.58px;top:994.20px;width:23.35px;height:18.60px;"></div>
<svg style="left:648.65px;top:998.90px;" width="9.20" height="9.20" viewBox="0 0 12 12"><path d="M1 1 L11 11 M11 1 L1 11" stroke="#fff" stroke-width="1.7" fill="none"/></svg>
<div style="left:670.30px;top:988.70px;width:1.40px;height:30.50px;background:#1f242a;"></div>
<span class="t" style="left:708.00px;top:995.25px;font-size:15.30px;line-height:15.30px;color:#fff;letter-spacing:-0.045px;">Logs</span>
<div class="btn" style="left:770.90px;top:994.20px;width:21.90px;height:18.60px;"></div>
<svg style="left:777.25px;top:998.90px;" width="9.20" height="9.20" viewBox="0 0 12 12"><path d="M1 1 L11 11 M11 1 L1 11" stroke="#fff" stroke-width="1.7" fill="none"/></svg>
<div style="left:799.80px;top:988.70px;width:1.40px;height:30.50px;background:#1f242a;"></div>
<span class="t" style="left:813.50px;top:995.25px;font-size:15.30px;line-height:15.30px;color:#fff;letter-spacing:0.224px;">Documents</span>
<div class="btn" style="left:899.90px;top:994.20px;width:21.90px;height:18.60px;"></div>
<svg style="left:906.25px;top:998.90px;" width="9.20" height="9.20" viewBox="0 0 12 12"><path d="M1 1 L11 11 M11 1 L1 11" stroke="#fff" stroke-width="1.7" fill="none"/></svg>
<div style="left:173px;top:1019px;width:744px;height:734px;overflow:hidden">
<span class="t" style="left:-3.95px;top:10.40px;font-size:17.00px;line-height:17.00px;color:#fff;letter-spacing:-0.166px;">Origin</span>
<div class="" style="left:126.80px;top:4.50px;width:603.90px;height:27.30px;background:#616161;border:0;border-radius:2px;"></div>
<span class="t" style="left:134.70px;top:10.40px;font-size:17.00px;line-height:17.00px;color:#fff;letter-spacing:-0.035px;">Created</span>
<div class="inp" style="left:133.40px;top:45.60px;width:22.20px;height:23.00px;border-radius:3px;border-color:#4a4948;"></div>
<span class="t" style="left:160.60px;top:47.40px;font-size:17.00px;line-height:17.00px;color:#fff;letter-spacing:-0.028px;">Is Inactive</span>
<span class="t" style="left:-4.05px;top:86.40px;font-size:17.00px;line-height:17.00px;color:#fff;letter-spacing:-0.203px;">Type</span>
<span class="t" style="left:128.20px;top:84.30px;font-size:19.20px;line-height:19.20px;color:#fff;letter-spacing:-0.345px;">Manifold</span>
<span class="t" style="left:-3.92px;top:120.40px;font-size:17.00px;line-height:17.00px;color:#fff;letter-spacing:-0.198px;">Tags</span>
<div class="inp" style="left:126.80px;top:114.80px;width:603.90px;height:26.80px;"></div>
<svg style="left:707.40px;top:123.60px;" width="14.60" height="10.00" viewBox="0 0 14.6 10"><path d="M1.2 1.6 L7.3 8 L13.4 1.6" fill="none" stroke="#3fae9a" stroke-width="2.4" stroke-linecap="round" stroke-linejoin="round"/></svg>
<span class="t" style="left:-1.56px;top:157.40px;font-size:17.00px;line-height:17.00px;color:#fff;letter-spacing:-0.176px;">Operator tags</span>
<div class="inp" style="left:126.80px;top:152.00px;width:603.90px;height:27.00px;"></div>
<svg style="left:707.40px;top:161.00px;" width="14.60" height="10.00" viewBox="0 0 14.6 10"><path d="M1.2 1.6 L7.3 8 L13.4 1.6" fill="none" stroke="#3fae9a" stroke-width="2.4" stroke-linecap="round" stroke-linejoin="round"/></svg>
<div style="left:131.90px;top:154.20px;width:156.6px;height:21.9px;border:1.6px solid #4be36e;border-radius:3px;background:#2b5b3b"></div>
<span class="t" style="left:137.50px;top:156.60px;font-size:18.60px;line-height:18.60px;color:#4be36e;letter-spacing:0.137px;">Tag Manifold 2</span>
<svg style="left:270.50px;top:160.00px;" width="10.60" height="10.60" viewBox="0 0 12 12"><path d="M1 1 L11 11 M11 1 L1 11" stroke="#fff" stroke-width="2" fill="none"/></svg>
<span class="t" style="left:-2.05px;top:195.40px;font-size:17.00px;line-height:17.00px;color:#fff;letter-spacing:-0.168px;">Supplier tags</span>
<div class="inp" style="left:126.80px;top:189.20px;width:603.90px;height:27.00px;"></div>
<svg style="left:707.40px;top:198.40px;" width="14.60" height="10.00" viewBox="0 0 14.6 10"><path d="M1.2 1.6 L7.3 8 L13.4 1.6" fill="none" stroke="#3fae9a" stroke-width="2.4" stroke-linecap="round" stroke-linejoin="round"/></svg>
<span class="t" style="left:-4.38px;top:232.40px;font-size:17.00px;line-height:17.00px;color:#fff;letter-spacing:-0.198px;">Source</span>
<div class="inp" style="left:126.80px;top:226.60px;width:567.70px;height:27.00px;"></div>
<div class="inp" style="left:696.40px;top:226.60px;width:34.00px;height:27.00px;"></div>
<svg style="left:704.40px;top:231.20px;" width="17.40" height="17.40" viewBox="0 0 18 18"><path d="M8 2.6 H3.4 Q1.2 2.6 1.2 4.8 V14.6 Q1.2 16.8 3.4 16.8 H13.2 Q15.4 16.8 15.4 14.6 V10" fill="none" stroke="#fff" stroke-width="2.1" stroke-linecap="round"/><path d="M6.4 9.2 L13.4 2.2 L15.8 4.6 L8.8 11.6 L5.8 12.2 Z" fill="#fff"/><path d="M14.2 1.4 Q15.4 0.2 16.6 1.4 Q17.8 2.6 16.6 3.8 Z" fill="#fff"/></svg>
<span class="t" style="left:-1.07px;top:269.40px;font-size:17.00px;line-height:17.00px;color:#fff;letter-spacing:-0.170px;">Description</span>
<div class="inp" style="left:126.80px;top:264.00px;width:567.70px;height:27.00px;"></div>
<div class="inp" style="left:696.40px;top:264.00px;width:34.00px;height:27.00px;"></div>
<svg style="left:704.40px;top:268.60px;" width="17.40" height="17.40" viewBox="0 0 18 18"><path d="M8 2.6 H3.4 Q1.2 2.6 1.2 4.8 V14.6 Q1.2 16.8 3.4 16.8 H13.2 Q15.4 16.8 15.4 14.6 V10" fill="none" stroke="#fff" stroke-width="2.1" stroke-linecap="round"/><path d="M6.4 9.2 L13.4 2.2 L15.8 4.6 L8.8 11.6 L5.8 12.2 Z" fill="#fff"/><path d="M14.2 1.4 Q15.4 0.2 16.6 1.4 Q17.8 2.6 16.6 3.8 Z" fill="#fff"/></svg>
<div class="inp" style="left:133.40px;top:304.20px;width:22.20px;height:23.00px;border-radius:3px;border-color:#4a4948;"></div>
<span class="t" style="left:160.60px;top:306.40px;font-size:17.00px;line-height:17.00px;color:#fff;letter-spacing:-0.033px;">Show Description</span>
<span class="t" style="left:-5.15px;top:347.40px;font-size:17.00px;line-height:17.00px;color:#fff;letter-spacing:-0.249px;">Name</span>
<div class="inp" style="left:126.80px;top:342.00px;width:603.90px;height:27.00px;"></div>
<span class="t" style="left:134.40px;top:347.40px;font-size:17.00px;line-height:17.00px;color:#fff;letter-spacing:0.083px;">Manifold #2</span>
<span class="t" style="left:-4.48px;top:384.40px;font-size:17.00px;line-height:17.00px;color:#fff;letter-spacing:-0.183px;">Label</span>
<div style="left:127.00px;top:379.00px;width:26.8px;height:26.8px;background:#fff;border-radius:2px"></div>
<div class="inp" style="left:157.60px;top:379.00px;width:497.90px;height:26.80px;"></div>
<span class="t" style="left:164.60px;top:385.40px;font-size:17.00px;line-height:17.00px;color:#fff;letter-spacing:-0.035px;">11</span>
<div class="inp" style="left:663.80px;top:382.00px;width:21.80px;height:22.00px;border-radius:3px;border-color:#4a4948;"></div>
<span class="t" style="left:690.00px;top:383.40px;font-size:17.00px;line-height:17.00px;color:#fff;letter-spacing:-0.043px;">Show</span>
<span class="t" style="left:-4.69px;top:424.40px;font-size:17.00px;line-height:17.00px;color:#fff;letter-spacing:-0.187px;">Scale</span>
<div class="inp" style="left:126.80px;top:418.40px;width:179.60px;height:27.20px;"></div>
<span class="t" style="left:134.40px;top:424.40px;font-size:17.00px;line-height:17.00px;color:#fff;">1</span>
<div style="left:312.30px;top:430.40px;width:412.70px;height:4.20px;background:#7a7a7a;"></div>
<div style="left:315.70px;top:421.00px;width:11.20px;height:22.00px;background:#fff;border-radius:1px;"></div>
<span class="t" style="left:-3.25px;top:461.40px;font-size:17.00px;line-height:17.00px;color:#fff;letter-spacing:-0.166px;">Position</span>
<div style="left:128.40px;top:456.20px;width:60.2px;height:29px;background:#3a6db3;border:1px solid #4a7cc0;border-radius:2px"></div>
<span class="t" style="left:136.40px;top:461.60px;font-size:18.60px;line-height:18.60px;color:#fff;letter-spacing:0.144px;">Copy</span>
<span class="t" style="left:33.60px;top:499.40px;font-size:17.00px;line-height:17.00px;color:#fff;">X</span>
<div class="inp" style="left:145.70px;top:495.00px;width:541.70px;height:27.00px;"></div>
<span class="t" style="left:153.20px;top:501.40px;font-size:17.00px;line-height:17.00px;color:#fff;letter-spacing:0.308px;">46.799379307952385</span>
<span class="t" style="left:694.70px;top:498.40px;font-size:17.00px;line-height:17.00px;color:#fff;">m</span>
<span class="t" style="left:33.60px;top:536.40px;font-size:17.00px;line-height:17.00px;color:#fff;">Y</span>
<div class="inp" style="left:145.70px;top:532.20px;width:541.70px;height:27.20px;"></div>
<span class="t" style="left:153.20px;top:538.40px;font-size:17.00px;line-height:17.00px;color:#fff;letter-spacing:0.436px;">29.668769998283594</span>
<span class="t" style="left:694.70px;top:535.40px;font-size:17.00px;line-height:17.00px;color:#fff;">m</span>
<span class="t" style="left:33.60px;top:574.40px;font-size:17.00px;line-height:17.00px;color:#fff;letter-spacing:0.114px;">Depth Offset</span>
<div class="inp" style="left:145.70px;top:569.60px;width:541.70px;height:27.00px;"></div>
<span class="t" style="left:153.20px;top:575.40px;font-size:17.00px;line-height:17.00px;color:#fff;">0</span>
<span class="t" style="left:694.70px;top:573.40px;font-size:17.00px;line-height:17.00px;color:#fff;">m</span>
<div class="inp" style="left:133.40px;top:610.00px;width:22.20px;height:23.00px;border-radius:3px;border-color:#4a4948;"></div>
<span class="t" style="left:160.60px;top:612.40px;font-size:17.00px;line-height:17.00px;color:#fff;letter-spacing:-0.034px;">No Height Sampling</span>
<span class="t" style="left:-3.47px;top:651.40px;font-size:17.00px;line-height:17.00px;color:#fff;letter-spacing:-0.200px;">Depth</span>
<div class="" style="left:126.80px;top:646.00px;width:561.20px;height:28.00px;background:#616161;border:0;border-radius:2px;"></div>
<span class="t" style="left:134.40px;top:652.40px;font-size:17.00px;line-height:17.00px;color:#fff;letter-spacing:0.019px;">-72.79171752929688</span>
<span class="t" style="left:694.70px;top:649.40px;font-size:17.00px;line-height:17.00px;color:#fff;">m</span>
<span class="t" style="left:-4.04px;top:689.40px;font-size:17.00px;line-height:17.00px;color:#fff;letter-spacing:-0.199px;">Heading</span>
<div class="inp" style="left:126.80px;top:684.20px;width:179.60px;height:27.40px;"></div>
<span class="t" style="left:134.40px;top:690.40px;font-size:17.00px;line-height:17.00px;color:#fff;letter-spacing:0.107px;">-113.26986980401...</span>
<div style="left:312.30px;top:695.60px;width:412.70px;height:4.20px;background:#7a7a7a;"></div>
<div style="left:451.20px;top:687.00px;width:9.40px;height:20.00px;background:#fff;border-radius:1px;"></div>
<span class="t" style="left:-3.06px;top:726.40px;font-size:17.00px;line-height:17.00px;color:#fff;letter-spacing:-0.181px;">Opacity</span>
<div class="inp" style="left:126.80px;top:721.20px;width:179.60px;height:27.80px;"></div>
<span class="t" style="left:134.40px;top:727.40px;font-size:17.00px;line-height:17.00px;color:#fff;">1</span>
<div style="left:312.30px;top:732.00px;width:412.70px;height:4.20px;background:#7a7a7a;"></div>
<div style="left:715.00px;top:725.00px;width:10.00px;height:20.00px;background:#fff;"></div>
</div>
<div style="left:917.00px;top:1019.20px;width:12.60px;height:733.80px;background:#323840;"></div>
<div style="left:917.00px;top:1019.60px;width:12.60px;height:680.60px;background:#6f6f6f;"></div>
<div style="left:173.00px;top:1753.00px;width:2792.00px;height:5.60px;background:#2f3237;"></div>
<div style="left:173.00px;top:1758.40px;width:2792.00px;height:15.00px;background:#1c1c1c;"></div>
<div style="left:173.00px;top:1761.40px;width:149.00px;height:12.00px;background:#2d3036;"></div>
<div style="left:324.60px;top:1761.40px;width:75.60px;height:12.00px;background:#3d454e;"></div>
<span class="t" style="left:169.60px;top:1763.25px;font-size:15.30px;line-height:15.30px;color:#fff;letter-spacing:-0.246px;">Connection Profile</span>
<span class="t" style="left:337.00px;top:1763.25px;font-size:15.30px;line-height:15.30px;color:#fff;letter-spacing:-0.115px;">Cost</span>
<svg style="left:303.00px;top:1767.60px;" width="8.40" height="8.40" viewBox="0 0 12 12"><path d="M1 1 L11 11 M11 1 L1 11" stroke="#7c7c7c" stroke-width="1.3" fill="none"/></svg>
<svg style="left:381.00px;top:1767.60px;" width="8.40" height="8.40" viewBox="0 0 12 12"><path d="M1 1 L11 11 M11 1 L1 11" stroke="#d0d0d0" stroke-width="1.3" fill="none"/></svg>
<svg style="left:2927.00px;top:1767.00px;" width="11.60" height="11.00" viewBox="0 0 12 11"><rect x="1" y="1.6" width="10" height="8.4" fill="none" stroke="#9a9a9a" stroke-width="1.6"/><rect x="0.2" y="0.4" width="11.6" height="2.6" fill="#9a9a9a"/></svg>
<svg style="left:2949.00px;top:1766.60px;" width="11.40" height="11.60" viewBox="0 0 12 12"><path d="M1 1 L11 11 M11 1 L1 11" stroke="#8a8a8a" stroke-width="1.1" fill="none"/></svg>
<div style="left:935.00px;top:110.00px;width:2030.00px;height:25.00px;background:#1c1c1c;"></div>
<div style="left:935.00px;top:111.50px;width:101.80px;height:23.50px;background:#3d454e;"></div>
<span class="t" style="left:948.30px;top:115.25px;font-size:15.30px;line-height:15.30px;color:#fff;letter-spacing:-0.232px;">Viewport</span>
<svg style="left:1017.90px;top:119.20px;" width="8.80" height="8.80" viewBox="0 0 12 12"><path d="M1 1 L11 11 M11 1 L1 11" stroke="#d0d0d0" stroke-width="1.5" fill="none"/></svg>
<svg style="left:2923.00px;top:117.50px;" width="11.60" height="11.00" viewBox="0 0 12 11"><rect x="1" y="1.6" width="10" height="8.4" fill="none" stroke="#9a9a9a" stroke-width="1.6"/><rect x="0.2" y="0.4" width="11.6" height="2.6" fill="#9a9a9a"/></svg>
<svg style="left:2945.40px;top:116.80px;" width="11.40" height="11.60" viewBox="0 0 12 12"><path d="M1 1 L11 11 M11 1 L1 11" stroke="#8a8a8a" stroke-width="1.1" fill="none"/></svg>
<div class="btn" style="left:942.00px;top:140.40px;width:60.90px;height:39.20px;"></div>
<svg style="left:949.80px;top:150.30px;" width="19.20" height="19.20" viewBox="0 0 24 24"><path d="M22.02 16.15 L21.85 16.54 L21.67 16.93 L21.47 17.30 L20.62 17.28 L19.73 17.17 L18.87 16.99 L18.09 16.80 L17.89 17.03 L17.69 17.26 L17.48 17.48 L17.26 17.69 L17.03 17.89 L16.80 18.09 L16.99 18.87 L17.17 19.73 L17.28 20.62 L17.30 21.47 L16.93 21.67 L16.54 21.85 L16.15 22.02 L15.76 22.18 L15.35 22.32 L14.94 22.44 L14.36 21.83 L13.81 21.12 L13.33 20.38 L12.91 19.70 L12.61 19.73 L12.30 19.74 L12.00 19.75 L11.70 19.74 L11.39 19.73 L11.09 19.70 L10.67 20.38 L10.19 21.12 L9.64 21.83 L9.06 22.44 L8.65 22.32 L8.24 22.18 L7.85 22.02 L7.46 21.85 L7.07 21.67 L6.70 21.47 L6.72 20.62 L6.83 19.73 L7.01 18.87 L7.20 18.09 L6.97 17.89 L6.74 17.69 L6.52 17.48 L6.31 17.26 L6.11 17.03 L5.91 16.80 L5.13 16.99 L4.27 17.17 L3.38 17.28 L2.53 17.30 L2.33 16.93 L2.15 16.54 L1.98 16.15 L1.82 15.76 L1.68 15.35 L1.56 14.94 L2.17 14.36 L2.88 13.81 L3.62 13.33 L4.30 12.91 L4.27 12.61 L4.26 12.30 L4.25 12.00 L4.26 11.70 L4.27 11.39 L4.30 11.09 L3.62 10.67 L2.88 10.19 L2.17 9.64 L1.56 9.06 L1.68 8.65 L1.82 8.24 L1.98 7.85 L2.15 7.46 L2.33 7.07 L2.53 6.70 L3.38 6.72 L4.27 6.83 L5.13 7.01 L5.91 7.20 L6.11 6.97 L6.31 6.74 L6.52 6.52 L6.74 6.31 L6.97 6.11 L7.20 5.91 L7.01 5.13 L6.83 4.27 L6.72 3.38 L6.70 2.53 L7.07 2.33 L7.46 2.15 L7.85 1.98 L8.24 1.82 L8.65 1.68 L9.06 1.56 L9.64 2.17 L10.19 2.88 L10.67 3.62 L11.09 4.30 L11.39 4.27 L11.70 4.26 L12.00 4.25 L12.30 4.26 L12.61 4.27 L12.91 4.30 L13.33 3.62 L13.81 2.88 L14.36 2.17 L14.94 1.56 L15.35 1.68 L15.76 1.82 L16.15 1.98 L16.54 2.15 L16.93 2.33 L17.30 2.53 L17.28 3.38 L17.17 4.27 L16.99 5.13 L16.80 5.91 L17.03 6.11 L17.26 6.31 L17.48 6.52 L17.69 6.74 L17.89 6.97 L18.09 7.20 L18.87 7.01 L19.73 6.83 L20.62 6.72 L21.47 6.70 L21.67 7.07 L21.85 7.46 L22.02 7.85 L22.18 8.24 L22.32 8.65 L22.44 9.06 L21.83 9.64 L21.12 10.19 L20.38 10.67 L19.70 11.09 L19.73 11.39 L19.74 11.70 L19.75 12.00 L19.74 12.30 L19.73 12.61 L19.70 12.91 L20.38 13.33 L21.12 13.81 L21.83 14.36 L22.44 14.94 L22.32 15.35 L22.18 15.76 Z" fill="none" stroke="#fff" stroke-width="2.6" stroke-linejoin="round"/><circle cx="12" cy="12" r="3.5" fill="none" stroke="#fff" stroke-width="2.6"/></svg>
<svg style="left:979.30px;top:157.40px;" width="12.00" height="7.80" viewBox="0 0 12 7.8"><path d="M1.4 1.2 L10.6 1.2 L6 6.6 Z" fill="none" stroke="#fff" stroke-width="1.6" stroke-linejoin="round"/></svg>
<div class="btn" style="left:1017.00px;top:140.40px;width:40.50px;height:39.20px;"></div>
<svg style="left:1026.80px;top:149.80px;" width="21.00" height="21.00" viewBox="0 0 22 22"><circle cx="8.6" cy="8.6" r="7.2" fill="none" stroke="#fff" stroke-width="1.9"/><path d="M13.8 13.8 L20.6 20.6" stroke="#fff" stroke-width="2.2" stroke-linecap="round"/><path d="M4.8 8.6 H12.4" stroke="#fff" stroke-width="1.9"/><path d="M8.6 4.8 V12.4" stroke="#fff" stroke-width="1.9"/></svg>
<div class="btn" style="left:1060.50px;top:140.40px;width:39.10px;height:39.20px;"></div>
<svg style="left:1069.60px;top:149.80px;" width="21.00" height="21.00" viewBox="0 0 22 22"><circle cx="8.6" cy="8.6" r="7.2" fill="none" stroke="#fff" stroke-width="1.9"/><path d="M13.8 13.8 L20.6 20.6" stroke="#fff" stroke-width="2.2" stroke-linecap="round"/><path d="M4.8 8.6 H12.4" stroke="#fff" stroke-width="1.9"/></svg>
<div class="btn" style="left:1102.90px;top:140.40px;width:39.80px;height:39.20px;"></div>
<svg style="left:1114.00px;top:151.60px;" width="18.00" height="17.00" viewBox="0 0 18 17"><path d="M1 5.4 V1 H5.6 M12.4 1 H17 V5.4 M17 11.6 V16 H12.4 M5.6 16 H1 V11.6" fill="none" stroke="#fff" stroke-width="2.1"/></svg>
<div class="btnd" style="left:1157.00px;top:140.40px;width:39.60px;height:39.20px;"></div>
<svg style="left:1165.80px;top:150.00px;" width="22.00" height="20.00" viewBox="0 0 22.8 20"><path d="M0.6 13 Q3.3 10.6 6 13 T11.4 13 T16.8 13 T22.2 13 M0.6 18 Q3.3 15.6 6 18 T11.4 18 T16.8 18 T22.2 18" fill="none" stroke="#c8c8c8" stroke-width="1.6"/><path d="M11 9 V1.4 M7.6 4.6 L11 1.2 L14.4 4.6" fill="none" stroke="#c8c8c8" stroke-width="1.6" stroke-linejoin="round"/></svg>
<div class="btnd" style="left:1198.90px;top:140.40px;width:39.70px;height:39.20px;"></div>
<svg style="left:1207.80px;top:150.00px;" width="22.00" height="20.00" viewBox="0 0 22.8 20"><path d="M0.6 13 Q3.3 10.6 6 13 T11.4 13 T16.8 13 T22.2 13 M0.6 18 Q3.3 15.6 6 18 T11.4 18 T16.8 18 T22.2 18" fill="none" stroke="#c8c8c8" stroke-width="1.6"/><path d="M11 0.6 V8.6 M7.6 5.2 L11 8.8 L14.4 5.2" fill="none" stroke="#c8c8c8" stroke-width="1.6" stroke-linejoin="round"/></svg>
<div class="btn" style="left:1253.20px;top:140.40px;width:39.50px;height:39.20px;"></div>
<svg style="left:1263.00px;top:150.00px;" width="20.00" height="19.80" viewBox="0 0 20 20"><path d="M10 10.6 L0.6 14.6 L10 19 L19.4 14.6 Z" fill="#fff" stroke="#fff" stroke-width="1" stroke-linejoin="round"/><path d="M10 6 L0.6 10 L10 14.4 L19.4 10 Z" fill="#fff" stroke="#46505a" stroke-width="1.3" stroke-linejoin="round"/><path d="M10 0.8 L0.6 5 L10 9.6 L19.4 5 Z" fill="#fff" stroke="#46505a" stroke-width="1.3" stroke-linejoin="round"/></svg>
<div class="btnd" style="left:1295.40px;top:140.40px;width:39.20px;height:39.20px;"></div>
<svg style="left:1303.70px;top:152.70px;" width="23.00" height="15.00" viewBox="0 0 23 15"><rect x="0" y="0" width="15.6" height="15" rx="3" fill="#9a9a9a"/><path d="M16.6 5 L22 1.6 Q23 1.2 23 2.4 V12.6 Q23 13.8 22 13.4 L16.6 10 Z" fill="#9a9a9a"/></svg>
<div class="btn" style="left:1338.20px;top:140.40px;width:38.80px;height:39.20px;"></div>
<svg style="left:1350.00px;top:151.40px;" width="15.00" height="17.00" viewBox="0 0 15 17"><path d="M1 1 L14 8.5 L1 16 Z" fill="#fff" stroke="#fff" stroke-width="1.6" stroke-linejoin="round"/></svg>
<div style="left:1393.00px;top:140.70px;width:38.00px;height:38.20px;background:#52e874;"></div>
<span class="t" style="left:1401.40px;top:153.00px;font-size:15.80px;line-height:15.80px;color:#000;letter-spacing:0.451px;">2D</span>
<div class="btn" style="left:1434.50px;top:140.40px;width:39.80px;height:39.20px;"></div>
<span class="t" style="left:1444.00px;top:153.00px;font-size:15.80px;line-height:15.80px;color:#fff;letter-spacing:0.301px;">3D</span>
<div class="btn" style="left:1489.00px;top:140.40px;width:39.80px;height:39.20px;"></div>
<svg style="left:1498.60px;top:150.00px;" width="20.00" height="20.00" viewBox="0 0 20 20"><circle cx="10" cy="10" r="9.8" fill="#b4b9be"/><circle cx="10" cy="10" r="7.7" fill="#fff"/></svg>
<div class="btn" style="left:1531.00px;top:140.40px;width:39.70px;height:39.20px;"></div>
<svg style="left:1532.60px;top:141.60px;" width="36.00" height="36.00" viewBox="0 -1 36 36"><g transform="rotate(0 18 19)"><path d="M11 8 L15 2.4 Q18 -0.6 21 2.4 L25.4 9" fill="none" stroke="#6e7882" stroke-width="4" stroke-linejoin="round"/><path d="M20.6 10.6 L28.6 11.6 L27 3.8 Z" fill="#6e7882"/></g><g transform="rotate(120 18 19)"><path d="M11 8 L15 2.4 Q18 -0.6 21 2.4 L25.4 9" fill="none" stroke="#6e7882" stroke-width="4" stroke-linejoin="round"/><path d="M20.6 10.6 L28.6 11.6 L27 3.8 Z" fill="#6e7882"/></g><g transform="rotate(240 18 19)"><path d="M11 8 L15 2.4 Q18 -0.6 21 2.4 L25.4 9" fill="none" stroke="#6e7882" stroke-width="4" stroke-linejoin="round"/><path d="M20.6 10.6 L28.6 11.6 L27 3.8 Z" fill="#6e7882"/></g></svg>
<svg style="left:1540.20px;top:149.50px;" width="20.00" height="20.00" viewBox="0 0 20 20"><circle cx="10" cy="10" r="9.8" fill="#b4b9be"/><circle cx="10" cy="10" r="7.7" fill="#fff"/></svg>
<div style="left:1585.90px;top:140.70px;width:38.40px;height:38.20px;background:#52e874;"></div>
<svg style="left:1595.00px;top:147.00px;" width="20.00" height="25.00" viewBox="0 0 20 25"><path d="M10 3.4 V12.6 L5.2 20.6 M10 12.6 L14.6 22" fill="none" stroke="#000" stroke-width="1.9" stroke-linecap="round" stroke-linejoin="round"/></svg>
<div class="btn" style="left:1639.00px;top:140.40px;width:40.00px;height:39.20px;"></div>
<svg style="left:1648.80px;top:149.80px;" width="20.40" height="20.40" viewBox="0 0 20.4 20.4"><circle cx="10.2" cy="10.2" r="10.2" fill="#fff"/><rect x="4.6" y="6.8" width="8" height="6.8" rx="1.4" fill="#46505a"/><path d="M13.2 9 L16.6 7 V13.4 L13.2 11.4 Z" fill="#46505a"/></svg>
<div class="btn" style="left:1693.40px;top:140.40px;width:40.20px;height:39.20px;"></div>
<svg style="left:1703.40px;top:149.40px;" width="22.00" height="22.00" viewBox="0 0 22 22"><path d="M8.00 3.40 Q8.85 10.15 15.60 11.00 Q8.85 11.85 8.00 18.60 Q7.15 11.85 0.40 11.00 Q7.15 10.15 8.00 3.40 Z M17.00 0.20 Q17.40 3.40 20.60 3.80 Q17.40 4.20 17.00 7.40 Q16.60 4.20 13.40 3.80 Q16.60 3.40 17.00 0.20 Z M16.20 13.60 Q16.60 16.80 19.80 17.20 Q16.60 17.60 16.20 20.80 Q15.80 17.60 12.60 17.20 Q15.80 16.80 16.20 13.60 Z" fill="#fff"/></svg>
<span class="t" style="left:2623.00px;top:150.55px;font-size:20.70px;line-height:20.70px;color:#fff;letter-spacing:-0.165px;">20.38, 18.59, -72.79</span>
<span class="t" style="left:2809.60px;top:150.55px;font-size:20.70px;line-height:20.70px;color:#fff;font-weight:700;-webkit-text-stroke-width:0;">m</span>
<span class="t" style="left:2832.50px;top:150.55px;font-size:20.70px;line-height:20.70px;color:#fff;letter-spacing:-0.494px;">EPSG:23032</span>
<svg style="left:935px;top:185px;font-family:'Liberation Sans',sans-serif" width="2030" height="743" viewBox="935 185 2030 743"><rect x="935" y="184" width="2030" height="745" fill="#555768"/><path d="M1046.4 184 V928" stroke="#ffffff" stroke-opacity="0.42" stroke-width="1.3"/><path d="M1181.6 184 V928" stroke="#ffffff" stroke-opacity="0.62" stroke-width="1.9"/><path d="M1316.8 184 V928" stroke="#ffffff" stroke-opacity="0.42" stroke-width="1.3"/><path d="M1452.0 184 V928" stroke="#ffffff" stroke-opacity="0.62" stroke-width="1.9"/><path d="M1587.2 184 V928" stroke="#ffffff" stroke-opacity="0.42" stroke-width="1.3"/><path d="M1722.4 184 V928" stroke="#ffffff" stroke-opacity="0.62" stroke-width="1.9"/><path d="M1857.6 184 V928" stroke="#ffffff" stroke-opacity="0.42" stroke-width="1.3"/><path d="M1992.8 184 V928" stroke="#ffffff" stroke-opacity="0.62" stroke-width="1.9"/><path d="M2128.0 184 V928" stroke="#ffffff" stroke-opacity="0.42" stroke-width="1.3"/><path d="M2263.2 184 V928" stroke="#ffffff" stroke-opacity="0.62" stroke-width="1.9"/><path d="M2398.4 184 V928" stroke="#ffffff" stroke-opacity="0.42" stroke-width="1.3"/><path d="M2533.6 184 V928" stroke="#ffffff" stroke-opacity="0.62" stroke-width="1.9"/><path d="M2668.8 184 V928" stroke="#ffffff" stroke-opacity="0.42" stroke-width="1.3"/><path d="M2804.0 184 V928" stroke="#ffffff" stroke-opacity="0.62" stroke-width="1.9"/><path d="M2939.2 184 V928" stroke="#ffffff" stroke-opacity="0.42" stroke-width="1.3"/><path d="M935 200.8 H2965" stroke="#ffffff" stroke-opacity="0.62" stroke-width="1.9"/><path d="M935 336.1 H2965" stroke="#ffffff" stroke-opacity="0.42" stroke-width="1.3"/><path d="M935 471.4 H2965" stroke="#ffffff" stroke-opacity="0.62" stroke-width="1.9"/><path d="M935 606.7 H2965" stroke="#ffffff" stroke-opacity="0.42" stroke-width="1.3"/><path d="M935 742.0 H2965" stroke="#ffffff" stroke-opacity="0.62" stroke-width="1.9"/><path d="M935 877.3 H2965" stroke="#ffffff" stroke-opacity="0.42" stroke-width="1.3"/><text x="939.4" y="195.6" font-size="21.3" fill="#eeeef2" textLength="21.0" lengthAdjust="spacingAndGlyphs">40</text><text x="939.4" y="466.2" font-size="21.3" fill="#eeeef2" textLength="21.0" lengthAdjust="spacingAndGlyphs">32</text><text x="939.4" y="736.8" font-size="21.3" fill="#eeeef2" textLength="21.0" lengthAdjust="spacingAndGlyphs">24</text><text x="1186.4" y="922.6" font-size="21.3" fill="#eeeef2" textLength="21.0" lengthAdjust="spacingAndGlyphs">24</text><text x="1456.8" y="922.6" font-size="21.3" fill="#eeeef2" textLength="21.0" lengthAdjust="spacingAndGlyphs">32</text><text x="1727.2" y="922.6" font-size="21.3" fill="#eeeef2" textLength="21.0" lengthAdjust="spacingAndGlyphs">40</text><text x="1997.6" y="922.6" font-size="21.3" fill="#eeeef2" textLength="21.0" lengthAdjust="spacingAndGlyphs">48</text><text x="2268.0" y="922.6" font-size="21.3" fill="#eeeef2" textLength="21.0" lengthAdjust="spacingAndGlyphs">56</text><text x="2538.4" y="922.6" font-size="21.3" fill="#eeeef2" textLength="21.0" lengthAdjust="spacingAndGlyphs">64</text><text x="2808.8" y="922.6" font-size="21.3" fill="#eeeef2" textLength="21.0" lengthAdjust="spacingAndGlyphs">72</text><linearGradient id="g1" gradientUnits="userSpaceOnUse" x1="1013.87" y1="364.66" x2="1013.13" y2="381.14"><stop offset="0" stop-color="#34363a"/><stop offset="0.32" stop-color="#63666b"/><stop offset="0.6" stop-color="#3e4044"/><stop offset="1" stop-color="#222427"/></linearGradient><path d="M915.0 368.5 L1112.0 377.3" fill="none" stroke="url(#g1)" stroke-width="16.5" stroke-linejoin="round"/><linearGradient id="g2" gradientUnits="userSpaceOnUse" x1="1474.93" y1="410.45" x2="1473.07" y2="426.85"><stop offset="0" stop-color="#34363a"/><stop offset="0.32" stop-color="#63666b"/><stop offset="0.6" stop-color="#3e4044"/><stop offset="1" stop-color="#222427"/></linearGradient><path d="M1108.0 377.1 L1840.0 460.2" fill="none" stroke="url(#g2)" stroke-width="16.5" stroke-linejoin="round"/><linearGradient id="g3" gradientUnits="userSpaceOnUse" x1="998.28" y1="293.16" x2="1012.72" y2="302.14"><stop offset="0" stop-color="#34363a"/><stop offset="0.32" stop-color="#63666b"/><stop offset="0.6" stop-color="#3e4044"/><stop offset="1" stop-color="#222427"/></linearGradient><path d="M1097.1 150.3 L913.9 445.0" fill="none" stroke="url(#g3)" stroke-width="17.0" stroke-linejoin="round"/><path d="M1736.6 144.3 L1231.0 968.0" fill="none" stroke="#b7313b" stroke-width="24.8"/><linearGradient id="g4" gradientUnits="userSpaceOnUse" x1="1476.38" y1="551.60" x2="1491.22" y2="560.70"><stop offset="0" stop-color="#34363a"/><stop offset="0.32" stop-color="#63666b"/><stop offset="0.6" stop-color="#3e4044"/><stop offset="1" stop-color="#222427"/></linearGradient><path d="M1732.9 150.2 L1234.7 962.1" fill="none" stroke="url(#g4)" stroke-width="17.4" stroke-linejoin="round"/><linearGradient id="g5" gradientUnits="userSpaceOnUse" x1="1647.05" y1="551.71" x2="1661.55" y2="560.59"><stop offset="0" stop-color="#34363a"/><stop offset="0.32" stop-color="#63666b"/><stop offset="0.6" stop-color="#3e4044"/><stop offset="1" stop-color="#222427"/></linearGradient><path d="M1902.9 150.2 L1405.7 962.1" fill="none" stroke="url(#g5)" stroke-width="17.0" stroke-linejoin="round"/><linearGradient id="g6" gradientUnits="userSpaceOnUse" x1="1574.21" y1="742.47" x2="1588.59" y2="751.53"><stop offset="0" stop-color="#34363a"/><stop offset="0.32" stop-color="#63666b"/><stop offset="0.6" stop-color="#3e4044"/><stop offset="1" stop-color="#222427"/></linearGradient><path d="M1714.3 536.0 L1467.4 928.0 L1448.5 958.0" fill="none" stroke="url(#g6)" stroke-width="17.0" stroke-linejoin="round"/><linearGradient id="g7" gradientUnits="userSpaceOnUse" x1="1870.04" y1="551.73" x2="1884.56" y2="560.57"><stop offset="0" stop-color="#34363a"/><stop offset="0.32" stop-color="#63666b"/><stop offset="0.6" stop-color="#3e4044"/><stop offset="1" stop-color="#222427"/></linearGradient><path d="M2124.8 150.1 L1629.8 962.2" fill="none" stroke="url(#g7)" stroke-width="17.0" stroke-linejoin="round"/><linearGradient id="g8" gradientUnits="userSpaceOnUse" x1="2599.39" y1="551.66" x2="2614.41" y2="560.64"><stop offset="0" stop-color="#e01414"/><stop offset="0.3" stop-color="#ff3c3c"/><stop offset="0.6" stop-color="#e80808"/><stop offset="1" stop-color="#b00404"/></linearGradient><path d="M2849.5 150.0 L2364.3 962.3" fill="none" stroke="url(#g8)" stroke-width="17.5" stroke-linejoin="round"/><linearGradient id="g9" gradientUnits="userSpaceOnUse" x1="1894.06" y1="820.55" x2="1912.94" y2="825.45"><stop offset="0" stop-color="#e01414"/><stop offset="0.3" stop-color="#ff3c3c"/><stop offset="0.6" stop-color="#e80808"/><stop offset="1" stop-color="#b00404"/></linearGradient><path d="M1937.0 694.0 L1870.0 952.0" fill="none" stroke="url(#g9)" stroke-width="19.5" stroke-linejoin="round"/><g transform="translate(1729.4,506.8) rotate(-23)"><path d="M0 0 H50 V14 H314 V0 H366 V263 H286 V249 H84 V263 H0 Z" fill="#fff" stroke="#fff" stroke-width="6.6" stroke-linejoin="round"/><rect x="0.0" y="-12.0" width="11.0" height="13.0" rx="0.0" fill="#fff" stroke="#fff" stroke-width="6.6" stroke-linejoin="round"/><rect x="-14.0" y="-19.5" width="34.0" height="7.5" rx="1.5" fill="#fff" stroke="#fff" stroke-width="6.6" stroke-linejoin="round"/><rect x="355.0" y="-12.0" width="11.0" height="13.0" rx="0.0" fill="#fff" stroke="#fff" stroke-width="6.6" stroke-linejoin="round"/><rect x="346.0" y="-19.5" width="34.0" height="7.5" rx="1.5" fill="#fff" stroke="#fff" stroke-width="6.6" stroke-linejoin="round"/><rect x="0.0" y="262.0" width="11.0" height="13.0" rx="0.0" fill="#fff" stroke="#fff" stroke-width="6.6" stroke-linejoin="round"/><rect x="-8.0" y="274.5" width="35.0" height="8.0" rx="1.5" fill="#fff" stroke="#fff" stroke-width="6.6" stroke-linejoin="round"/><rect x="355.0" y="262.0" width="11.0" height="13.0" rx="0.0" fill="#fff" stroke="#fff" stroke-width="6.6" stroke-linejoin="round"/><rect x="339.0" y="274.5" width="35.0" height="8.0" rx="1.5" fill="#fff" stroke="#fff" stroke-width="6.6" stroke-linejoin="round"/><g transform="translate(81.8,20.0) rotate(0)"><rect x="-27.2" y="-45.0" width="5.4" height="80.0" rx="2.4" fill="#fff" stroke="#fff" stroke-width="6.6" stroke-linejoin="round"/><rect x="21.8" y="-45.0" width="5.4" height="80.0" rx="2.4" fill="#fff" stroke="#fff" stroke-width="6.6" stroke-linejoin="round"/><rect x="-24.5" y="-28.0" width="49.0" height="4.0" rx="1.0" fill="#fff" stroke="#fff" stroke-width="6.6" stroke-linejoin="round"/></g><g transform="translate(148.6,19.6) rotate(0)"><rect x="-27.2" y="-45.0" width="5.4" height="80.0" rx="2.4" fill="#fff" stroke="#fff" stroke-width="6.6" stroke-linejoin="round"/><rect x="21.8" y="-45.0" width="5.4" height="80.0" rx="2.4" fill="#fff" stroke="#fff" stroke-width="6.6" stroke-linejoin="round"/><rect x="-24.5" y="-28.0" width="49.0" height="4.0" rx="1.0" fill="#fff" stroke="#fff" stroke-width="6.6" stroke-linejoin="round"/></g><g transform="translate(217.0,18.4) rotate(0)"><rect x="-27.2" y="-45.0" width="5.4" height="80.0" rx="2.4" fill="#fff" stroke="#fff" stroke-width="6.6" stroke-linejoin="round"/><rect x="21.8" y="-45.0" width="5.4" height="80.0" rx="2.4" fill="#fff" stroke="#fff" stroke-width="6.6" stroke-linejoin="round"/><rect x="-24.5" y="-28.0" width="49.0" height="4.0" rx="1.0" fill="#fff" stroke="#fff" stroke-width="6.6" stroke-linejoin="round"/></g><g transform="translate(283.6,17.4) rotate(0)"><rect x="-27.2" y="-45.0" width="5.4" height="80.0" rx="2.4" fill="#fff" stroke="#fff" stroke-width="6.6" stroke-linejoin="round"/><rect x="21.8" y="-45.0" width="5.4" height="80.0" rx="2.4" fill="#fff" stroke="#fff" stroke-width="6.6" stroke-linejoin="round"/><rect x="-24.5" y="-28.0" width="49.0" height="4.0" rx="1.0" fill="#fff" stroke="#fff" stroke-width="6.6" stroke-linejoin="round"/></g><g transform="translate(116.6,244.6) rotate(180)"><rect x="-27.2" y="-45.0" width="5.4" height="80.0" rx="2.4" fill="#fff" stroke="#fff" stroke-width="6.6" stroke-linejoin="round"/><rect x="21.8" y="-45.0" width="5.4" height="80.0" rx="2.4" fill="#fff" stroke="#fff" stroke-width="6.6" stroke-linejoin="round"/><rect x="-24.5" y="-28.0" width="49.0" height="4.0" rx="1.0" fill="#fff" stroke="#fff" stroke-width="6.6" stroke-linejoin="round"/></g><g transform="translate(184.7,244.6) rotate(180)"><rect x="-27.2" y="-45.0" width="5.4" height="80.0" rx="2.4" fill="#fff" stroke="#fff" stroke-width="6.6" stroke-linejoin="round"/><rect x="21.8" y="-45.0" width="5.4" height="80.0" rx="2.4" fill="#fff" stroke="#fff" stroke-width="6.6" stroke-linejoin="round"/><rect x="-24.5" y="-28.0" width="49.0" height="4.0" rx="1.0" fill="#fff" stroke="#fff" stroke-width="6.6" stroke-linejoin="round"/></g><g transform="translate(253.6,243.4) rotate(180)"><rect x="-27.2" y="-45.0" width="5.4" height="80.0" rx="2.4" fill="#fff" stroke="#fff" stroke-width="6.6" stroke-linejoin="round"/><rect x="21.8" y="-45.0" width="5.4" height="80.0" rx="2.4" fill="#fff" stroke="#fff" stroke-width="6.6" stroke-linejoin="round"/><rect x="-24.5" y="-28.0" width="49.0" height="4.0" rx="1.0" fill="#fff" stroke="#fff" stroke-width="6.6" stroke-linejoin="round"/></g><g transform="translate(399.8,28.7) rotate(90)"><rect x="-27.2" y="-54.0" width="5.4" height="83.0" rx="2.4" fill="#fff" stroke="#fff" stroke-width="6.6" stroke-linejoin="round"/><rect x="21.8" y="-54.0" width="5.4" height="83.0" rx="2.4" fill="#fff" stroke="#fff" stroke-width="6.6" stroke-linejoin="round"/></g><g transform="translate(409.8,96.6) rotate(90)"><rect x="-27.2" y="-45.0" width="5.4" height="80.0" rx="2.4" fill="#fff" stroke="#fff" stroke-width="6.6" stroke-linejoin="round"/><rect x="21.8" y="-45.0" width="5.4" height="80.0" rx="2.4" fill="#fff" stroke="#fff" stroke-width="6.6" stroke-linejoin="round"/><rect x="-24.5" y="-28.0" width="49.0" height="4.0" rx="1.0" fill="#fff" stroke="#fff" stroke-width="6.6" stroke-linejoin="round"/></g><g transform="translate(409.8,163.1) rotate(90)"><rect x="-27.2" y="-45.0" width="5.4" height="80.0" rx="2.4" fill="#fff" stroke="#fff" stroke-width="6.6" stroke-linejoin="round"/><rect x="21.8" y="-45.0" width="5.4" height="80.0" rx="2.4" fill="#fff" stroke="#fff" stroke-width="6.6" stroke-linejoin="round"/><rect x="-24.5" y="-28.0" width="49.0" height="4.0" rx="1.0" fill="#fff" stroke="#fff" stroke-width="6.6" stroke-linejoin="round"/></g><g transform="translate(400.8,231.2) rotate(90)"><rect x="-27.2" y="-54.0" width="5.4" height="83.0" rx="2.4" fill="#fff" stroke="#fff" stroke-width="6.6" stroke-linejoin="round"/><rect x="21.8" y="-54.0" width="5.4" height="83.0" rx="2.4" fill="#fff" stroke="#fff" stroke-width="6.6" stroke-linejoin="round"/></g><g transform="translate(-31.6,29.7) rotate(270)"><rect x="-27.2" y="-54.0" width="5.4" height="83.0" rx="2.4" fill="#fff" stroke="#fff" stroke-width="6.6" stroke-linejoin="round"/><rect x="21.8" y="-54.0" width="5.4" height="83.0" rx="2.4" fill="#fff" stroke="#fff" stroke-width="6.6" stroke-linejoin="round"/></g><g transform="translate(-40.5,98.2) rotate(270)"><rect x="-27.2" y="-45.0" width="5.4" height="80.0" rx="2.4" fill="#fff" stroke="#fff" stroke-width="6.6" stroke-linejoin="round"/><rect x="21.8" y="-45.0" width="5.4" height="80.0" rx="2.4" fill="#fff" stroke="#fff" stroke-width="6.6" stroke-linejoin="round"/><rect x="-24.5" y="-28.0" width="49.0" height="4.0" rx="1.0" fill="#fff" stroke="#fff" stroke-width="6.6" stroke-linejoin="round"/></g><g transform="translate(-41.1,165.4) rotate(270)"><rect x="-27.2" y="-45.0" width="5.4" height="80.0" rx="2.4" fill="#fff" stroke="#fff" stroke-width="6.6" stroke-linejoin="round"/><rect x="21.8" y="-45.0" width="5.4" height="80.0" rx="2.4" fill="#fff" stroke="#fff" stroke-width="6.6" stroke-linejoin="round"/><rect x="-24.5" y="-28.0" width="49.0" height="4.0" rx="1.0" fill="#fff" stroke="#fff" stroke-width="6.6" stroke-linejoin="round"/></g><g transform="translate(-30.7,232.6) rotate(270)"><rect x="-27.2" y="-54.0" width="5.4" height="83.0" rx="2.4" fill="#fff" stroke="#fff" stroke-width="6.6" stroke-linejoin="round"/><rect x="21.8" y="-54.0" width="5.4" height="83.0" rx="2.4" fill="#fff" stroke="#fff" stroke-width="6.6" stroke-linejoin="round"/></g><path d="M0 0 H50 V14 H314 V0 H366 V263 H286 V249 H84 V263 H0 Z" fill="#ffe545"/><rect x="0.0" y="-12.0" width="11.0" height="13.0" rx="0.0" fill="#ffe545"/><rect x="-14.0" y="-19.5" width="34.0" height="7.5" rx="1.5" fill="#ffe545"/><rect x="355.0" y="-12.0" width="11.0" height="13.0" rx="0.0" fill="#ffe545"/><rect x="346.0" y="-19.5" width="34.0" height="7.5" rx="1.5" fill="#ffe545"/><rect x="0.0" y="262.0" width="11.0" height="13.0" rx="0.0" fill="#ffe545"/><rect x="-8.0" y="274.5" width="35.0" height="8.0" rx="1.5" fill="#ffe545"/><rect x="355.0" y="262.0" width="11.0" height="13.0" rx="0.0" fill="#ffe545"/><rect x="339.0" y="274.5" width="35.0" height="8.0" rx="1.5" fill="#ffe545"/><g transform="translate(81.8,20.0) rotate(0)"><rect x="-27.2" y="-45.0" width="5.4" height="80.0" rx="2.4" fill="#ffe545"/><rect x="21.8" y="-45.0" width="5.4" height="80.0" rx="2.4" fill="#ffe545"/><rect x="-24.5" y="-28.0" width="49.0" height="4.0" rx="1.0" fill="#ffe545"/><rect x="-21.8" y="-9" width="43.6" height="17" fill="#fff"/><rect x="-21.8" y="8" width="43.6" height="27" fill="#ffe545"/><rect x="-21.5" y="-5" width="43" height="4.2" fill="#e2b62e"/><path d="M-21.4 -22 V30 M21.4 -22 V30" stroke="#9d9d9d" stroke-width="2.2"/><path d="M-17 31 L-9 13 H9 L17 31" fill="none" stroke="#e6b82a" stroke-width="4.6" stroke-linejoin="round"/><path d="M-8 23 H8" stroke="#a9a9a9" stroke-width="2.6"/><circle cx="0" cy="-2" r="10.8" fill="#7fd4e6"/><g transform="translate(0,-2) rotate(23)"><path d="M-9.8 3.7 L9.8 -3.7" stroke="#f1fcff" stroke-width="3.2"/></g></g><g transform="translate(148.6,19.6) rotate(0)"><rect x="-27.2" y="-45.0" width="5.4" height="80.0" rx="2.4" fill="#ffe545"/><rect x="21.8" y="-45.0" width="5.4" height="80.0" rx="2.4" fill="#ffe545"/><rect x="-24.5" y="-28.0" width="49.0" height="4.0" rx="1.0" fill="#ffe545"/><rect x="-21.8" y="-9" width="43.6" height="17" fill="#fff"/><rect x="-21.8" y="8" width="43.6" height="27" fill="#ffe545"/><rect x="-21.5" y="-5" width="43" height="4.2" fill="#e2b62e"/><path d="M-21.4 -22 V30 M21.4 -22 V30" stroke="#9d9d9d" stroke-width="2.2"/><path d="M-17 31 L-9 13 H9 L17 31" fill="none" stroke="#e6b82a" stroke-width="4.6" stroke-linejoin="round"/><path d="M-8 23 H8" stroke="#a9a9a9" stroke-width="2.6"/><circle cx="0" cy="-2" r="10.8" fill="#7fd4e6"/><g transform="translate(0,-2) rotate(23)"><path d="M-9.8 3.7 L9.8 -3.7" stroke="#f1fcff" stroke-width="3.2"/></g></g><g transform="translate(217.0,18.4) rotate(0)"><rect x="-27.2" y="-45.0" width="5.4" height="80.0" rx="2.4" fill="#ffe545"/><rect x="21.8" y="-45.0" width="5.4" height="80.0" rx="2.4" fill="#ffe545"/><rect x="-24.5" y="-28.0" width="49.0" height="4.0" rx="1.0" fill="#ffe545"/><rect x="-21.8" y="-9" width="43.6" height="17" fill="#fff"/><rect x="-21.8" y="8" width="43.6" height="27" fill="#ffe545"/><rect x="-21.5" y="-5" width="43" height="4.2" fill="#e2b62e"/><path d="M-21.4 -22 V30 M21.4 -22 V30" stroke="#9d9d9d" stroke-width="2.2"/><path d="M-17 31 L-9 13 H9 L17 31" fill="none" stroke="#e6b82a" stroke-width="4.6" stroke-linejoin="round"/><path d="M-8 23 H8" stroke="#a9a9a9" stroke-width="2.6"/><circle cx="0" cy="-2" r="10.8" fill="#7fd4e6"/><g transform="translate(0,-2) rotate(23)"><path d="M-9.8 3.7 L9.8 -3.7" stroke="#f1fcff" stroke-width="3.2"/></g></g><g transform="translate(283.6,17.4) rotate(0)"><rect x="-27.2" y="-45.0" width="5.4" height="80.0" rx="2.4" fill="#ffe545"/><rect x="21.8" y="-45.0" width="5.4" height="80.0" rx="2.4" fill="#ffe545"/><rect x="-24.5" y="-28.0" width="49.0" height="4.0" rx="1.0" fill="#ffe545"/><rect x="-21.8" y="-9" width="43.6" height="17" fill="#fff"/><rect x="-21.8" y="8" width="43.6" height="27" fill="#ffe545"/><rect x="-21.5" y="-5" width="43" height="4.2" fill="#e2b62e"/><path d="M-21.4 -22 V30 M21.4 -22 V30" stroke="#9d9d9d" stroke-width="2.2"/><path d="M-17 31 L-9 13 H9 L17 31" fill="none" stroke="#e6b82a" stroke-width="4.6" stroke-linejoin="round"/><path d="M-8 23 H8" stroke="#a9a9a9" stroke-width="2.6"/><circle cx="0" cy="-2" r="10.8" fill="#7fd4e6"/><g transform="translate(0,-2) rotate(23)"><path d="M-9.8 3.7 L9.8 -3.7" stroke="#f1fcff" stroke-width="3.2"/></g></g><g transform="translate(116.6,244.6) rotate(180)"><rect x="-27.2" y="-45.0" width="5.4" height="80.0" rx="2.4" fill="#ffe545"/><rect x="21.8" y="-45.0" width="5.4" height="80.0" rx="2.4" fill="#ffe545"/><rect x="-24.5" y="-28.0" width="49.0" height="4.0" rx="1.0" fill="#ffe545"/><rect x="-21.8" y="-9" width="43.6" height="17" fill="#fff"/><rect x="-21.8" y="8" width="43.6" height="27" fill="#ffe545"/><rect x="-21.5" y="-5" width="43" height="4.2" fill="#e2b62e"/><path d="M-21.4 -22 V30 M21.4 -22 V30" stroke="#9d9d9d" stroke-width="2.2"/><path d="M-17 31 L-9 13 H9 L17 31" fill="none" stroke="#e6b82a" stroke-width="4.6" stroke-linejoin="round"/><path d="M-8 23 H8" stroke="#a9a9a9" stroke-width="2.6"/><circle cx="0" cy="-2" r="10.8" fill="#7fd4e6"/><g transform="translate(0,-2) rotate(-157)"><path d="M-9.8 3.7 L9.8 -3.7" stroke="#f1fcff" stroke-width="3.2"/></g></g><g transform="translate(184.7,244.6) rotate(180)"><rect x="-27.2" y="-45.0" width="5.4" height="80.0" rx="2.4" fill="#ffe545"/><rect x="21.8" y="-45.0" width="5.4" height="80.0" rx="2.4" fill="#ffe545"/><rect x="-24.5" y="-28.0" width="49.0" height="4.0" rx="1.0" fill="#ffe545"/><rect x="-21.8" y="-9" width="43.6" height="17" fill="#fff"/><rect x="-21.8" y="8" width="43.6" height="27" fill="#ffe545"/><rect x="-21.5" y="-5" width="43" height="4.2" fill="#e2b62e"/><path d="M-21.4 -22 V30 M21.4 -22 V30" stroke="#9d9d9d" stroke-width="2.2"/><path d="M-17 31 L-9 13 H9 L17 31" fill="none" stroke="#e6b82a" stroke-width="4.6" stroke-linejoin="round"/><path d="M-8 23 H8" stroke="#a9a9a9" stroke-width="2.6"/><circle cx="0" cy="-2" r="10.8" fill="#7fd4e6"/><g transform="translate(0,-2) rotate(-157)"><path d="M-9.8 3.7 L9.8 -3.7" stroke="#f1fcff" stroke-width="3.2"/></g></g><g transform="translate(253.6,243.4) rotate(180)"><rect x="-27.2" y="-45.0" width="5.4" height="80.0" rx="2.4" fill="#ffe545"/><rect x="21.8" y="-45.0" width="5.4" height="80.0" rx="2.4" fill="#ffe545"/><rect x="-24.5" y="-28.0" width="49.0" height="4.0" rx="1.0" fill="#ffe545"/><rect x="-21.8" y="-9" width="43.6" height="17" fill="#fff"/><rect x="-21.8" y="8" width="43.6" height="27" fill="#ffe545"/><rect x="-21.5" y="-5" width="43" height="4.2" fill="#e2b62e"/><path d="M-21.4 -22 V30 M21.4 -22 V30" stroke="#9d9d9d" stroke-width="2.2"/><path d="M-17 31 L-9 13 H9 L17 31" fill="none" stroke="#e6b82a" stroke-width="4.6" stroke-linejoin="round"/><path d="M-8 23 H8" stroke="#a9a9a9" stroke-width="2.6"/><circle cx="0" cy="-2" r="10.8" fill="#7fd4e6"/><g transform="translate(0,-2) rotate(-157)"><path d="M-9.8 3.7 L9.8 -3.7" stroke="#f1fcff" stroke-width="3.2"/></g></g><g transform="translate(399.8,28.7) rotate(90)"><rect x="-27.2" y="-54.0" width="5.4" height="83.0" rx="2.4" fill="#ffe545"/><rect x="21.8" y="-54.0" width="5.4" height="83.0" rx="2.4" fill="#ffe545"/><rect x="-21.5" y="4" width="43" height="10" fill="#fff"/><rect x="-19" y="12" width="38" height="20" fill="#ffe545"/><path d="M-21.4 -40 V-6 M21.4 -40 V-6" stroke="#a5a5a5" stroke-width="2"/><path d="M-17 30 L-7 10 H7 L17 30" fill="none" stroke="#e6b82a" stroke-width="4.2" stroke-linejoin="round"/><circle cx="0" cy="-2" r="10.8" fill="#7fd4e6"/><g transform="translate(0,-2) rotate(-67)"><path d="M-9.8 3.7 L9.8 -3.7" stroke="#f1fcff" stroke-width="3.2"/></g></g><g transform="translate(409.8,96.6) rotate(90)"><rect x="-27.2" y="-45.0" width="5.4" height="80.0" rx="2.4" fill="#ffe545"/><rect x="21.8" y="-45.0" width="5.4" height="80.0" rx="2.4" fill="#ffe545"/><rect x="-24.5" y="-28.0" width="49.0" height="4.0" rx="1.0" fill="#ffe545"/><rect x="-21.8" y="-9" width="43.6" height="17" fill="#fff"/><rect x="-21.8" y="8" width="43.6" height="27" fill="#fff3a8"/><rect x="-21.5" y="-5" width="43" height="4.2" fill="#e2b62e"/><path d="M-21.4 -22 V30 M21.4 -22 V30" stroke="#9d9d9d" stroke-width="2.2"/><path d="M-17 31 L-9 13 H9 L17 31" fill="none" stroke="#e6b82a" stroke-width="4.6" stroke-linejoin="round"/><path d="M-8 23 H8" stroke="#a9a9a9" stroke-width="2.6"/><circle cx="0" cy="-2" r="10.8" fill="#7fd4e6"/><g transform="translate(0,-2) rotate(-67)"><path d="M-9.8 3.7 L9.8 -3.7" stroke="#f1fcff" stroke-width="3.2"/></g></g><g transform="translate(409.8,163.1) rotate(90)"><rect x="-27.2" y="-45.0" width="5.4" height="80.0" rx="2.4" fill="#ffe545"/><rect x="21.8" y="-45.0" width="5.4" height="80.0" rx="2.4" fill="#ffe545"/><rect x="-24.5" y="-28.0" width="49.0" height="4.0" rx="1.0" fill="#ffe545"/><rect x="-21.8" y="-9" width="43.6" height="17" fill="#fff"/><rect x="-21.8" y="8" width="43.6" height="27" fill="#fff3a8"/><rect x="-21.5" y="-5" width="43" height="4.2" fill="#e2b62e"/><path d="M-21.4 -22 V30 M21.4 -22 V30" stroke="#9d9d9d" stroke-width="2.2"/><path d="M-17 31 L-9 13 H9 L17 31" fill="none" stroke="#e6b82a" stroke-width="4.6" stroke-linejoin="round"/><path d="M-8 23 H8" stroke="#a9a9a9" stroke-width="2.6"/><circle cx="0" cy="-2" r="10.8" fill="#7fd4e6"/><g transform="translate(0,-2) rotate(-67)"><path d="M-9.8 3.7 L9.8 -3.7" stroke="#f1fcff" stroke-width="3.2"/></g></g><g transform="translate(400.8,231.2) rotate(90)"><rect x="-27.2" y="-54.0" width="5.4" height="83.0" rx="2.4" fill="#ffe545"/><rect x="21.8" y="-54.0" width="5.4" height="83.0" rx="2.4" fill="#ffe545"/><rect x="-21.5" y="4" width="43" height="10" fill="#fff"/><rect x="-19" y="12" width="38" height="20" fill="#ffe545"/><path d="M-21.4 -40 V-6 M21.4 -40 V-6" stroke="#a5a5a5" stroke-width="2"/><path d="M-17 30 L-7 10 H7 L17 30" fill="none" stroke="#e6b82a" stroke-width="4.2" stroke-linejoin="round"/><circle cx="0" cy="-2" r="10.8" fill="#7fd4e6"/><g transform="translate(0,-2) rotate(-67)"><path d="M-9.8 3.7 L9.8 -3.7" stroke="#f1fcff" stroke-width="3.2"/></g></g><g transform="translate(-31.6,29.7) rotate(270)"><rect x="-27.2" y="-54.0" width="5.4" height="83.0" rx="2.4" fill="#ffe545"/><rect x="21.8" y="-54.0" width="5.4" height="83.0" rx="2.4" fill="#ffe545"/><rect x="-21.5" y="4" width="43" height="10" fill="#fff"/><rect x="-19" y="12" width="38" height="20" fill="#ffe545"/><path d="M-21.4 -40 V-6 M21.4 -40 V-6" stroke="#a5a5a5" stroke-width="2"/><path d="M-17 30 L-7 10 H7 L17 30" fill="none" stroke="#e6b82a" stroke-width="4.2" stroke-linejoin="round"/><circle cx="0" cy="-2" r="10.8" fill="#7fd4e6"/><g transform="translate(0,-2) rotate(-247)"><path d="M-9.8 3.7 L9.8 -3.7" stroke="#f1fcff" stroke-width="3.2"/></g></g><g transform="translate(-40.5,98.2) rotate(270)"><rect x="-27.2" y="-45.0" width="5.4" height="80.0" rx="2.4" fill="#ffe545"/><rect x="21.8" y="-45.0" width="5.4" height="80.0" rx="2.4" fill="#ffe545"/><rect x="-24.5" y="-28.0" width="49.0" height="4.0" rx="1.0" fill="#ffe545"/><rect x="-21.8" y="-9" width="43.6" height="17" fill="#fff"/><rect x="-21.8" y="8" width="43.6" height="27" fill="#fff3a8"/><rect x="-21.5" y="-5" width="43" height="4.2" fill="#e2b62e"/><path d="M-21.4 -22 V30 M21.4 -22 V30" stroke="#9d9d9d" stroke-width="2.2"/><path d="M-17 31 L-9 13 H9 L17 31" fill="none" stroke="#e6b82a" stroke-width="4.6" stroke-linejoin="round"/><path d="M-8 23 H8" stroke="#a9a9a9" stroke-width="2.6"/><circle cx="0" cy="-2" r="10.8" fill="#7fd4e6"/><g transform="translate(0,-2) rotate(-247)"><path d="M-9.8 3.7 L9.8 -3.7" stroke="#f1fcff" stroke-width="3.2"/></g></g><g transform="translate(-41.1,165.4) rotate(270)"><rect x="-27.2" y="-45.0" width="5.4" height="80.0" rx="2.4" fill="#ffe545"/><rect x="21.8" y="-45.0" width="5.4" height="80.0" rx="2.4" fill="#ffe545"/><rect x="-24.5" y="-28.0" width="49.0" height="4.0" rx="1.0" fill="#ffe545"/><rect x="-21.8" y="-9" width="43.6" height="17" fill="#fff"/><rect x="-21.8" y="8" width="43.6" height="27" fill="#fff3a8"/><rect x="-21.5" y="-5" width="43" height="4.2" fill="#e2b62e"/><path d="M-21.4 -22 V30 M21.4 -22 V30" stroke="#9d9d9d" stroke-width="2.2"/><path d="M-17 31 L-9 13 H9 L17 31" fill="none" stroke="#e6b82a" stroke-width="4.6" stroke-linejoin="round"/><path d="M-8 23 H8" stroke="#a9a9a9" stroke-width="2.6"/><circle cx="0" cy="-2" r="10.8" fill="#7fd4e6"/><g transform="translate(0,-2) rotate(-247)"><path d="M-9.8 3.7 L9.8 -3.7" stroke="#f1fcff" stroke-width="3.2"/></g></g><g transform="translate(-30.7,232.6) rotate(270)"><rect x="-27.2" y="-54.0" width="5.4" height="83.0" rx="2.4" fill="#ffe545"/><rect x="21.8" y="-54.0" width="5.4" height="83.0" rx="2.4" fill="#ffe545"/><rect x="-21.5" y="4" width="43" height="10" fill="#fff"/><rect x="-19" y="12" width="38" height="20" fill="#ffe545"/><path d="M-21.4 -40 V-6 M21.4 -40 V-6" stroke="#a5a5a5" stroke-width="2"/><path d="M-17 30 L-7 10 H7 L17 30" fill="none" stroke="#e6b82a" stroke-width="4.2" stroke-linejoin="round"/><circle cx="0" cy="-2" r="10.8" fill="#7fd4e6"/><g transform="translate(0,-2) rotate(-247)"><path d="M-9.8 3.7 L9.8 -3.7" stroke="#f1fcff" stroke-width="3.2"/></g></g><path d="M12 257.0 H80 M292 257.0 H360" stroke="#ff5a2c" stroke-width="2"/><path d="M-3 4 V56 M369 4 V54 M369 208 V258 M-3 208 V258" fill="none" stroke="#ff5a2c" stroke-width="1.8"/><path d="M168 40 L184 26 L198 36 L186 52 Z" fill="#3a3c44"/></g><rect x="1896" y="550" width="55" height="56" fill="#ff9545"/><path d="M1778 550.6 H1951" stroke="#ff7a50" stroke-width="1.4"/><path d="M1746 550.6 L1780.5 542 V559.2 Z" fill="#ff4a4a"/><path d="M1951.6 606 V724" stroke="#9be37f" stroke-width="1.3"/><path d="M1952 721.6 L1943.6 756.8 H1961 Z" fill="#7de07b"/><path d="M1848.8 605 A50 50 0 0 0 1897.4 654.2" fill="none" stroke="#ca494b" stroke-width="17"/><path d="M1848.8 577.6 L1831.2 606 H1866.4 Z" fill="#ca494b"/><path d="M1925 654.2 L1896.4 636.6 V671.8 Z" fill="#ca494b"/><g fill="none" stroke="#fff"><circle cx="981.2" cy="884.4" r="22.4" stroke-width="1.3"/><circle cx="981.2" cy="884.4" r="19.4" stroke-width="0.8"/><circle cx="981.2" cy="884.4" r="6.4" stroke-width="1.6"/></g><path d="M981.2 853.4 L985.4 878.4 L977.0 878.4 ZM1012.6 884.4 L987.2 888.6 L987.2 880.2 ZM981.2 914.4 L977.0 890.4 L985.4 890.4 ZM948.6 884.4 L975.2 880.2 L975.2 888.6 Z M994.3 871.3 L988.0 882.7 L982.9 877.6 ZM994.3 897.5 L982.9 891.2 L988.0 886.1 ZM968.1 897.5 L974.4 886.1 L979.5 891.2 ZM968.1 871.3 L979.5 877.6 L974.4 882.7 Z" fill="#fff"/><text x="981.2" y="852.0" font-size="6.5" font-weight="700" fill="#fff" text-anchor="middle">N</text><text x="1013.4" y="886.6" font-size="6.5" font-weight="700" fill="#fff">E</text><rect x="2646.3" y="866.8" width="134.4" height="5" fill="#fff"/><rect x="2780.7" y="866.8" width="135.1" height="5" fill="#000"/><text x="2641.0" y="857.2" font-size="16" fill="#fff" text-anchor="middle" stroke="#fff" stroke-width="0.3">0</text><text x="2775.4" y="857.2" font-size="16" fill="#fff" text-anchor="middle" stroke="#fff" stroke-width="0.3">4</text><text x="2911.2" y="857.2" font-size="16" fill="#fff" text-anchor="middle" stroke="#fff" stroke-width="0.3">8</text><text x="2916" y="883.8" font-size="16.4" fill="#fff" text-anchor="end" stroke="#fff" stroke-width="0.3">m</text></svg>
<div style="left:935.00px;top:928.00px;width:2030.00px;height:7.50px;background:#323439;"></div>
<div style="left:935.00px;top:935.50px;width:2030.00px;height:24.50px;background:#1c1c1c;"></div>
<div style="left:935.00px;top:936.00px;width:154.00px;height:24.00px;background:#3d454e;"></div>
<span class="t" style="left:948.00px;top:939.26px;font-size:15.29px;line-height:15.29px;color:#fff;letter-spacing:-0.194px;">Pete Documents</span>
<svg style="left:1070.40px;top:943.20px;" width="9.00" height="9.00" viewBox="0 0 12 12"><path d="M1 1 L11 11 M11 1 L1 11" stroke="#d0d0d0" stroke-width="1.5" fill="none"/></svg>
<svg style="left:2923.60px;top:942.20px;" width="11.60" height="11.00" viewBox="0 0 12 11"><rect x="1" y="1.6" width="10" height="8.4" fill="none" stroke="#9a9a9a" stroke-width="1.6"/><rect x="0.2" y="0.4" width="11.6" height="2.6" fill="#9a9a9a"/></svg>
<svg style="left:2945.30px;top:941.60px;" width="11.40" height="11.60" viewBox="0 0 12 12"><path d="M1 1 L11 11 M11 1 L1 11" stroke="#8a8a8a" stroke-width="1.1" fill="none"/></svg>
<div style="left:935.00px;top:960.00px;width:2030.00px;height:793.00px;background:#fff;"></div>
<div style="left:2938.50px;top:960.00px;width:26.50px;height:793.00px;background:#fafafa;border-left:1.4px solid #e6e6e6;"></div>
<div style="left:2945.30px;top:966.00px;width:15.00px;height:759.40px;background:#c1c1c1;border-radius:7.5px;"></div>
<span class="t" style="left:951.00px;top:994.43px;font-size:34.94px;line-height:34.94px;color:#212529;letter-spacing:-0.288px;-webkit-text-stroke:0.75px #212529;">Related Documents</span>
<div style="left:950.20px;top:1042.70px;width:1972.50px;height:527.30px;background:#f8f9fa;border:1.4px solid #d9dde1;border-radius:9px;"></div>
<span class="t" style="left:971.30px;top:1068.66px;font-size:20.49px;line-height:20.49px;color:#212529;letter-spacing:-0.074px;">Selected asset: Manifold #2</span>
<div style="left:971.30px;top:1113.50px;width:255.90px;height:53.50px;background:#fff;border:1.4px solid #dee2e6;border-bottom:0;border-radius:9px 9px 0 0;"></div>
<div style="left:971.30px;top:1165.30px;width:1930.60px;height:384.40px;background:#fff;border:1.4px solid #dee2e6;border-top:0;border-radius:0 0 8px 8px;"></div>
<div style="left:1226.50px;top:1165.30px;width:1675.40px;height:1.40px;background:#dee2e6;"></div>
<svg style="left:992.00px;top:1128.00px;" width="20.00" height="20.40" viewBox="0 0 20 20.4"><rect x="0.6" y="0.6" width="18.8" height="19.2" rx="3" fill="#fff" stroke="#b9bcc0" stroke-width="1.1"/><g transform="translate(10,10.4) scale(1.45) translate(-9.2,-9.7)"><path d="M3.6 7.4 L9.6 8.8 L8.6 16.6 Z" fill="#1f9cc4"/><path d="M9.6 8.8 L13.6 7 L14.6 12.8 L8.6 16.6 Z" fill="#16305e"/><path d="M9.8 2.8 L13.8 7 L9.6 8.8 L7.4 6 Z" fill="#f6d36a"/><path d="M9.4 3.4 L8.6 6.4 L9.6 8.8 L9.9 5 Z" fill="#e8743b"/></g></svg>
<span class="t" style="left:1024.00px;top:1127.52px;font-size:24.75px;line-height:24.75px;color:#000;letter-spacing:-0.169px;">ValveTrack (75)</span>
<span class="t" style="left:982.20px;top:1210.66px;font-size:20.49px;line-height:20.49px;color:#212529;letter-spacing:-0.459px;">Search:</span>
<div style="left:1060.40px;top:1196.40px;width:476.10px;height:46.00px;background:#e8f0fe;border:1.4px solid #86b7fe;border-radius:7px;box-shadow:0 0 0 4.8px rgba(13,110,253,0.25);"></div>
<span class="t" style="left:1076.60px;top:1210.66px;font-size:20.49px;line-height:20.49px;color:#212529;letter-spacing:-0.338px;">bar</span>
<div style="left:1105.80px;top:1207.00px;width:1.60px;height:23.80px;background:#111;"></div>
<span class="t" style="left:1558.00px;top:1210.66px;font-size:20.49px;line-height:20.49px;color:#212529;font-weight:700;-webkit-text-stroke-width:0;letter-spacing:0.042px;">4 of 75</span>
<div style="left:982.20px;top:1261.80px;width:1908.80px;height:1.50px;background:#dee2e6;"></div>
<span class="t" style="left:992.40px;top:1289.66px;font-size:20.49px;line-height:20.49px;color:#000;font-weight:700;-webkit-text-stroke-width:0;letter-spacing:-0.323px;">Valve Tag</span>
<span class="t" style="left:1247.90px;top:1289.66px;font-size:20.49px;line-height:20.49px;color:#000;font-weight:700;-webkit-text-stroke-width:0;letter-spacing:-0.050px;">Title</span>
<span class="t" style="left:2287.70px;top:1289.66px;font-size:20.49px;line-height:20.49px;color:#000;font-weight:700;-webkit-text-stroke-width:0;letter-spacing:-0.416px;">Last Log Time</span>
<span class="t" style="left:2665.50px;top:1289.66px;font-size:20.49px;line-height:20.49px;color:#000;font-weight:700;-webkit-text-stroke-width:0;letter-spacing:-0.152px;">Valve Status</span>
<svg style="left:1093.00px;top:1292.00px;" width="12.00" height="16.00" viewBox="0 0 12 16"><path d="M6 15 V1.6 M1 6.6 L6 1.4 L11 6.6" fill="none" stroke="#8a8a8a" stroke-width="1.4"/></svg>
<svg style="left:1299.40px;top:1292.00px;" width="12.00" height="16.00" viewBox="0 0 12 16"><path d="M6 15 V1.6 M1 6.6 L6 1.4 L11 6.6" fill="none" stroke="#8a8a8a" stroke-width="1.4"/></svg>
<div style="left:982.00px;top:1326.10px;width:1908.80px;height:50.90px;background:#f2f2f2;"></div>
<div style="left:982.00px;top:1325.40px;width:1908.80px;height:1.40px;background:#dee2e6;"></div>
<span class="t" style="left:992.40px;top:1341.66px;font-size:20.49px;line-height:20.49px;color:#000;letter-spacing:-0.305px;">18-V-13871</span>
<span class="t" style="left:1247.90px;top:1341.66px;font-size:20.49px;line-height:20.49px;color:#0d6efd;letter-spacing:-0.717px;">10" 583 BAR SUBSEA S.E. BALL VALVE WITH GEAR (SPUR)</span>
<span class="t" style="left:2287.70px;top:1341.66px;font-size:20.49px;line-height:20.49px;color:#000;letter-spacing:-0.134px;">3/14/2025, 1:45:49 PM</span>
<div style="left:2665.20px;top:1335.70px;width:74.50px;height:30.40px;background:#dc143c;"></div>
<span class="t" style="left:2669.00px;top:1341.52px;font-size:19.76px;line-height:19.76px;color:#fff;font-weight:700;-webkit-text-stroke-width:0;letter-spacing:-0.014px;">Closed</span>
<div style="left:982.00px;top:1376.30px;width:1908.80px;height:1.40px;background:#dee2e6;"></div>
<span class="t" style="left:992.40px;top:1392.66px;font-size:20.49px;line-height:20.49px;color:#000;letter-spacing:-0.095px;">18-V-13870</span>
<span class="t" style="left:1247.90px;top:1392.66px;font-size:20.49px;line-height:20.49px;color:#0d6efd;letter-spacing:-0.773px;">10" 373 BAR SUBSEA S.E. BALL VALVE WITH DIRECT STEM DRIVE</span>
<span class="t" style="left:2287.70px;top:1392.66px;font-size:20.49px;line-height:20.49px;color:#000;letter-spacing:-0.134px;">3/14/2025, 1:45:49 PM</span>
<div style="left:2665.20px;top:1386.60px;width:58.50px;height:30.40px;background:#2e8b57;"></div>
<span class="t" style="left:2669.00px;top:1392.52px;font-size:19.76px;line-height:19.76px;color:#fff;font-weight:700;-webkit-text-stroke-width:0;letter-spacing:0.025px;">Open</span>
<div style="left:982.00px;top:1427.30px;width:1908.80px;height:51.00px;background:#f2f2f2;"></div>
<div style="left:982.00px;top:1426.60px;width:1908.80px;height:1.40px;background:#dee2e6;"></div>
<span class="t" style="left:992.40px;top:1442.66px;font-size:20.49px;line-height:20.49px;color:#000;letter-spacing:-0.140px;">18-ESV-13806</span>
<span class="t" style="left:1247.90px;top:1442.66px;font-size:20.49px;line-height:20.49px;color:#0d6efd;letter-spacing:-0.456px;">HIPPS Barrier Valve 2</span>
<span class="t" style="left:2287.70px;top:1442.66px;font-size:20.49px;line-height:20.49px;color:#000;letter-spacing:-0.134px;">3/14/2025, 1:45:49 PM</span>
<div style="left:2665.20px;top:1436.90px;width:74.50px;height:30.40px;background:#dc143c;"></div>
<span class="t" style="left:2669.00px;top:1443.52px;font-size:19.76px;line-height:19.76px;color:#fff;font-weight:700;-webkit-text-stroke-width:0;letter-spacing:-0.014px;">Closed</span>
<div style="left:982.00px;top:1477.60px;width:1908.80px;height:1.40px;background:#dee2e6;"></div>
<span class="t" style="left:992.40px;top:1493.66px;font-size:20.49px;line-height:20.49px;color:#000;letter-spacing:-0.190px;">18-ESV-13805</span>
<span class="t" style="left:1247.90px;top:1493.66px;font-size:20.49px;line-height:20.49px;color:#0d6efd;letter-spacing:-0.575px;">HIPPS Barrier Valve 1</span>
<span class="t" style="left:2287.70px;top:1493.66px;font-size:20.49px;line-height:20.49px;color:#000;letter-spacing:-0.134px;">3/14/2025, 1:45:49 PM</span>
<div style="left:2665.20px;top:1487.90px;width:120.90px;height:30.40px;background:#ffa500;"></div>
<span class="t" style="left:2669.00px;top:1494.52px;font-size:19.76px;line-height:19.76px;color:#fff;font-weight:700;-webkit-text-stroke-width:0;letter-spacing:0.190px;">Partly Open</span>
<div style="left:982.00px;top:1528.20px;width:1908.80px;height:1.40px;background:#dee2e6;"></div>
<div style="left:950.20px;top:1581.60px;width:1972.50px;height:106.00px;background:#f8f9fa;border:1.4px solid #d9dde1;border-radius:9px;"></div>
<div style="left:970.90px;top:1607.40px;width:20.50px;height:19.40px;background:#fff;border:1.4px solid #d3d7db;border-radius:5px;"></div>
<span class="t" style="left:1001.00px;top:1605.66px;font-size:20.49px;line-height:20.49px;color:#212529;letter-spacing:-0.073px;">Enable background search to update document counts in Project View</span>
<div style="left:1001.00px;top:1639.80px;width:20.00px;height:19.40px;background:#fdfdfd;border:1.4px solid #e6e8ea;border-radius:5px;"></div>
<span class="t" style="left:1031.20px;top:1638.66px;font-size:20.49px;line-height:20.49px;color:#9b9ea1;letter-spacing:-0.089px;">Continue when this tab is hidden</span>
<svg style="left:2855.80px;top:1710.50px;" width="19.60" height="19.60" viewBox="0 0 19.6 19.6"><circle cx="9.8" cy="9.8" r="9.8" fill="#0d6efd"/><text x="9.8" y="15" font-size="15" font-weight="700" fill="#fff" text-anchor="middle" font-family="Liberation Sans,sans-serif">?</text></svg>
<span class="t" style="left:2881.80px;top:1709.40px;font-size:21.01px;line-height:21.01px;color:#0d6efd;letter-spacing:-0.752px;">Help</span>
<span class="t" style="left:2876.60px;top:1734.42px;font-size:19.97px;line-height:19.97px;color:#333;letter-spacing:-1.499px;">v1.9.3</span></div></body></html>
